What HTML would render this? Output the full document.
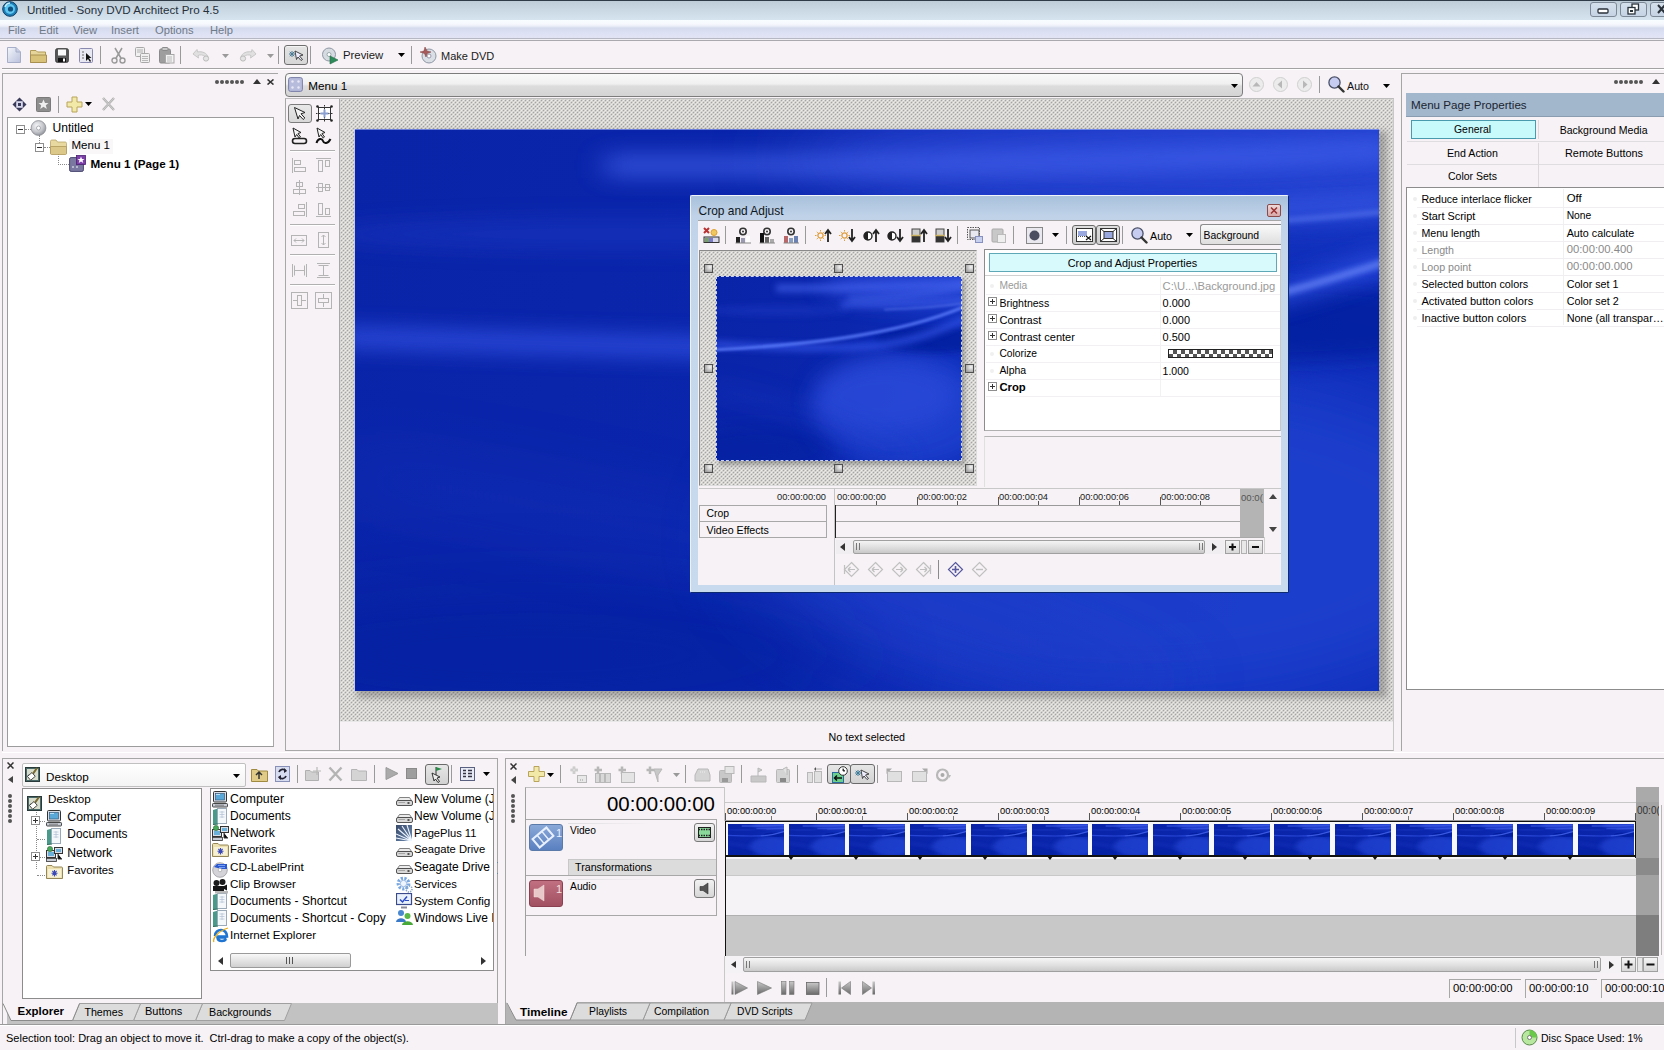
<!DOCTYPE html>
<html><head><meta charset="utf-8">
<style>
*{box-sizing:border-box;margin:0;padding:0}
html,body{width:1664px;height:1050px;overflow:hidden}
body{background:#f6f2f5;font-family:"Liberation Sans",sans-serif;font-size:11px;color:#000;position:relative}
.a{position:absolute}
.t{position:absolute;white-space:nowrap;line-height:1}
.chk{background-color:#dedddb;background-image:radial-gradient(circle at 1px 1px,#8a8a8a 0.8px,transparent 1.2px),radial-gradient(circle at 3px 3px,#8a8a8a 0.8px,transparent 1.2px);background-size:4px 4px}
</style></head><body>
<div class="a" style="left:0px;top:0px;width:1664px;height:20px;background:linear-gradient(#bccbd5,#c8d6e2 40%,#d6e4f0)"></div>
<div class="a" style="left:0px;top:0px;width:1664px;height:1px;background:#2f3b47"></div>
<svg class="a" style="left:2px;top:1px;" width="16" height="16" viewBox="0 0 16 16"><circle cx="8" cy="8" r="7.3" fill="#1e7fb8" stroke="#0c3f66" stroke-width="1"/><circle cx="8" cy="8" r="5" fill="#5ec6f0"/><circle cx="8.5" cy="8" r="2.6" fill="#10507e"/><path d="M3 6A6 6 0 0 1 8 2" stroke="#cdefff" stroke-width="1.4" fill="none"/></svg>
<div class="t" style="left:27px;top:4.18px;font-size:11.6px;color:#26303a;font-weight:normal;">Untitled - Sony DVD Architect Pro 4.5</div>
<div class="a" style="left:1590px;top:2px;width:27px;height:15px;border:1px solid #7d8896;border-radius:3px;background:linear-gradient(#d5e0ec,#c5d3e3)"></div>
<div class="a" style="left:1620px;top:2px;width:27px;height:15px;border:1px solid #7d8896;border-radius:3px;background:linear-gradient(#d5e0ec,#c5d3e3)"></div>
<div class="a" style="left:1650px;top:2px;width:20px;height:15px;border:1px solid #7d8896;border-radius:3px;background:linear-gradient(#d5e0ec,#c5d3e3)"></div>
<svg class="a" style="left:1597px;top:8px;" width="12" height="6" viewBox="0 0 12 6"><rect x="1" y="1" width="10" height="4" rx="1" fill="#fff" stroke="#2a323a" stroke-width="1.3"/></svg>
<svg class="a" style="left:1627px;top:3px;" width="13" height="12" viewBox="0 0 13 12"><rect x="5" y="1" width="6.5" height="6" fill="#fff" stroke="#2a323a" stroke-width="1.3"/><rect x="1" y="4.5" width="7" height="6.5" fill="#fff" stroke="#2a323a" stroke-width="1.3"/><rect x="3" y="7" width="3" height="2" fill="#2a323a"/></svg>
<svg class="a" style="left:1657px;top:4px;" width="8" height="11" viewBox="0 0 8 11"><path d="M1 1L8 9M8 1L1 9" stroke="#2a323a" stroke-width="2"/></svg>
<div class="a" style="left:0px;top:20px;width:1664px;height:18px;background:linear-gradient(#f8fdff 0,#f6f8fd 4px,#eceff9 6px,#d4dbec 8px,#d8ddf0 10px,#dde1f4 13px,#e2e4f4 18px)"></div>
<div class="a" style="left:0px;top:38px;width:1664px;height:1px;background:#b6b8c4"></div>
<div class="a" style="left:0px;top:39px;width:1664px;height:1px;background:#f0f0f4"></div>
<div class="a" style="left:0px;top:40px;width:1664px;height:1px;background:#a9a9ae"></div>
<div class="t" style="left:8px;top:24.52px;font-size:11.2px;color:#6f7a88;font-weight:normal;">File</div>
<div class="t" style="left:39px;top:24.52px;font-size:11.2px;color:#6f7a88;font-weight:normal;">Edit</div>
<div class="t" style="left:73px;top:24.52px;font-size:11.2px;color:#6f7a88;font-weight:normal;">View</div>
<div class="t" style="left:111px;top:24.52px;font-size:11.2px;color:#6f7a88;font-weight:normal;">Insert</div>
<div class="t" style="left:155px;top:24.52px;font-size:11.2px;color:#6f7a88;font-weight:normal;">Options</div>
<div class="t" style="left:210px;top:24.52px;font-size:11.2px;color:#6f7a88;font-weight:normal;">Help</div>
<div class="a" style="left:0px;top:41px;width:1664px;height:27px;background:#f6f2f5"></div>
<div class="a" style="left:2px;top:68px;width:1662px;height:1px;background:#a3a3a3"></div>
<div class="a" style="left:2px;top:69px;width:1662px;height:1px;background:#ffffff"></div>
<svg class="a" style="left:7px;top:47px;" width="14" height="16" viewBox="0 0 14 16"><defs><linearGradient id="gn" x1="0" y1="0" x2="1" y2="1"><stop offset="0" stop-color="#f4f6fb"/><stop offset="1" stop-color="#b9c1dc"/></linearGradient></defs><path d="M0.5 0.5H9L13.5 5V15.5H0.5Z" fill="url(#gn)" stroke="#a6aec8"/><path d="M9 0.5V5H13.5" fill="#c8cfe6" stroke="#a6aec8"/></svg>
<svg class="a" style="left:30px;top:48px;" width="17" height="15" viewBox="0 0 17 15"><path d="M0.5 2.5H6L7.5 4H15.5V14.5H0.5Z" fill="#e6d59a" stroke="#b09a58"/><path d="M0.5 7H16.5V14.5H0.5Z" fill="#d8c27a" stroke="#a89050"/></svg>
<svg class="a" style="left:55px;top:48px;" width="14" height="15" viewBox="0 0 14 15"><rect x="0.7" y="0.7" width="12.6" height="13.6" rx="1.5" fill="#5a5a5a" stroke="#3a3a3a"/><rect x="3" y="1.5" width="8" height="6" fill="#fafafa"/><rect x="3" y="10" width="8" height="4" fill="#111"/><rect x="8" y="10.5" width="2" height="3" fill="#fff"/></svg>
<svg class="a" style="left:79px;top:48px;" width="14" height="15" viewBox="0 0 14 15"><rect x="0.5" y="0.5" width="13" height="14" rx="1" fill="#e8e8f2" stroke="#8a8ab0"/><path d="M3 4H5M3 7H5M3 10H5" stroke="#666"/><path d="M7 5L7 13L9 11L11 14L12 13L10 10L12.5 10Z" fill="#111"/></svg>
<div class="a" style="left:100px;top:46px;width:1px;height:18px;background:#9a9a9a"></div>
<svg class="a" style="left:111px;top:47px;" width="15" height="17" viewBox="0 0 15 17"><path d="M4 1L10.5 12M11 1L4.5 12" stroke="#9a9a9a" stroke-width="1.5"/><circle cx="3.5" cy="13.5" r="2.5" fill="none" stroke="#9a9a9a" stroke-width="1.4"/><circle cx="11.5" cy="13.5" r="2.5" fill="none" stroke="#9a9a9a" stroke-width="1.4"/></svg>
<svg class="a" style="left:135px;top:47px;" width="16" height="16" viewBox="0 0 16 16"><rect x="0.5" y="0.5" width="9" height="9" rx="1" fill="#f0f0f0" stroke="#a8a8a8"/><path d="M2 3H8M2 5H8" stroke="#b0b0b0"/><rect x="5.5" y="6.5" width="9" height="9" rx="1" fill="#f0f0f0" stroke="#a8a8a8"/><path d="M7 9.5H13M7 11.5H13M7 13.5H13" stroke="#b8b8b8"/></svg>
<svg class="a" style="left:159px;top:47px;" width="16" height="17" viewBox="0 0 16 17"><rect x="0.5" y="2" width="11" height="14" rx="1.5" fill="#9e9e9e" stroke="#8a8a8a"/><rect x="3" y="0.5" width="6" height="3" rx="1" fill="#c8c8c8" stroke="#8a8a8a"/><rect x="6.5" y="7.5" width="8.5" height="8.5" fill="#f2f2f2" stroke="#a8a8a8"/><path d="M8 10H13M8 12H13M8 14H13" stroke="#bbb"/></svg>
<div class="a" style="left:180px;top:46px;width:1px;height:18px;background:#9a9a9a"></div>
<svg class="a" style="left:192px;top:48px;" width="20" height="14" viewBox="0 0 20 14"><path d="M1 6L5 1.5L5.5 4C10 3 15 5 16 9L13 8.5C11 6.5 8 6.5 6 7.5L6.5 10Z" fill="#e0e0e0" stroke="#c8c8c8"/><circle cx="14" cy="10.5" r="2.6" fill="#e4e4e4" stroke="#bbbbbb"/></svg>
<svg class="a" style="left:222px;top:54px;" width="7" height="4" viewBox="0 0 7 4"><path d="M0 0H7L3.5 4Z" fill="#9a9a9a"/></svg>
<svg class="a" style="left:237px;top:48px;" width="20" height="14" viewBox="0 0 20 14"><path d="M19 6L15 1.5L14.5 4C10 3 5 5 4 9L7 8.5C9 6.5 12 6.5 14 7.5L13.5 10Z" fill="#e0e0e0" stroke="#c8c8c8"/><circle cx="6" cy="10.5" r="2.6" fill="#e4e4e4" stroke="#bbbbbb"/></svg>
<svg class="a" style="left:267px;top:54px;" width="7" height="4" viewBox="0 0 7 4"><path d="M0 0H7L3.5 4Z" fill="#9a9a9a"/></svg>
<div class="a" style="left:278px;top:46px;width:1px;height:18px;background:#9a9a9a"></div>
<div class="a" style="left:284px;top:45px;width:24px;height:20px;border:1px solid #6e6e6e;border-radius:3px;background:linear-gradient(#e4e4e4,#d6d6d6);box-shadow:inset 0 1px 0 #f4f4f4"></div>
<svg class="a" style="left:288px;top:48px;" width="17" height="14" viewBox="0 0 17 14"><path d="M1 6H7M4 3V9M1.8 3.8L6.2 8.2M6.2 3.8L1.8 8.2" stroke="#4a7a96" stroke-width="1"/><path d="M7 3L15 7L11.5 8L14.5 11.5L13 12.5L10 9L8.5 11.5Z" fill="#eef" stroke="#333" stroke-width="0.9"/></svg>
<div class="a" style="left:310px;top:46px;width:1px;height:18px;background:#9a9a9a"></div>
<svg class="a" style="left:322px;top:47px;" width="17" height="18" viewBox="0 0 17 18"><circle cx="7" cy="7.5" r="6.5" fill="#d6dbe2" stroke="#8f98a4"/><circle cx="7" cy="7.5" r="2" fill="#fff" stroke="#9aa"/><path d="M8 9L16 13L8 17Z" fill="#2e8a5a" stroke="#1f6a44" stroke-width="0.6"/></svg>
<div class="t" style="left:343px;top:50.41px;font-size:11.33px;color:#1a1a1a;font-weight:normal;">Preview</div>
<svg class="a" style="left:398px;top:53px;" width="7" height="4" viewBox="0 0 7 4"><path d="M0 0H7L3.5 4Z" fill="#000"/></svg>
<div class="a" style="left:411px;top:46px;width:1px;height:18px;background:#9a9a9a"></div>
<svg class="a" style="left:419px;top:46px;" width="18" height="18" viewBox="0 0 18 18"><circle cx="10" cy="10" r="7" fill="#dadfe6" stroke="#8f98a4"/><circle cx="10" cy="10" r="2" fill="#fff" stroke="#99a"/><path d="M1 6L5 5L6 1L8 5L12 6L8 7.5L7 11L5.5 7.5Z" fill="#a85a5a" stroke="#7a3a3a" stroke-width="0.5"/></svg>
<div class="t" style="left:441px;top:50.67px;font-size:11.02px;color:#1a1a1a;font-weight:normal;">Make DVD</div>
<div class="a" style="left:2px;top:73px;width:276px;height:678px;border-top:1px solid #a6a6a6;border-left:1px solid #a6a6a6"></div>
<div class="a" style="left:215px;top:80px;width:4px;height:4px;border-radius:50%;background:#555"></div>
<div class="a" style="left:220px;top:80px;width:4px;height:4px;border-radius:50%;background:#555"></div>
<div class="a" style="left:225px;top:80px;width:4px;height:4px;border-radius:50%;background:#555"></div>
<div class="a" style="left:230px;top:80px;width:4px;height:4px;border-radius:50%;background:#555"></div>
<div class="a" style="left:235px;top:80px;width:4px;height:4px;border-radius:50%;background:#555"></div>
<div class="a" style="left:240px;top:80px;width:4px;height:4px;border-radius:50%;background:#555"></div>
<svg class="a" style="left:253px;top:79px;" width="8" height="5" viewBox="0 0 8 5"><path d="M0 5L4 0L8 5Z" fill="#333"/></svg>
<svg class="a" style="left:267px;top:79px;" width="7" height="6" viewBox="0 0 7 6"><path d="M0.5 0.5L6.5 5.5M6.5 0.5L0.5 5.5" stroke="#333" stroke-width="1.6"/></svg>
<svg class="a" style="left:12px;top:97px;" width="15" height="15" viewBox="0 0 15 15"><path d="M7.5 0.5L14.5 7.5L7.5 14.5L0.5 7.5Z" fill="#3a3a5a"/><rect x="4.2" y="4.2" width="6.6" height="6.6" fill="#d8d8ee"/><rect x="6" y="6" width="3" height="3" fill="#3a3a5a"/></svg>
<svg class="a" style="left:36px;top:97px;" width="15" height="15" viewBox="0 0 15 15"><rect x="0.5" y="0.5" width="14" height="14" rx="1" fill="#8e8e8e" stroke="#7a7a7a"/><path d="M7.5 2.5L9 6H12.5L9.8 8.2L10.8 12L7.5 9.8L4.2 12L5.2 8.2L2.5 6H6Z" fill="#f0f0f0"/></svg>
<div class="a" style="left:58px;top:96px;width:1px;height:17px;background:#9a9a9a"></div>
<svg class="a" style="left:66px;top:96px;" width="17" height="17" viewBox="0 0 17 17"><path d="M6 1H11V6H16V11H11V16H6V11H1V6H6Z" fill="#f2e8a8" stroke="#b8a45a"/></svg>
<svg class="a" style="left:85px;top:102px;" width="7" height="4" viewBox="0 0 7 4"><path d="M0 0H7L3.5 4Z" fill="#000"/></svg>
<svg class="a" style="left:101px;top:96px;" width="15" height="16" viewBox="0 0 15 16"><path d="M2 2L13 14M13 2L2 14" stroke="#b0b0b0" stroke-width="2.4"/><path d="M2 2L13 14M13 2L2 14" stroke="#d8d8d8" stroke-width="0.8"/></svg>
<div class="a" style="left:7px;top:117px;width:267px;height:630px;background:#fff;border:1px solid #9c9c9c;border-right-color:#a8a8a8"></div>
<div class="a" style="left:25px;top:129px;width:6px;height:1px;border-top:1px dotted #8a8a8a"></div>
<div class="a" style="left:39px;top:135px;width:1px;height:8px;border-left:1px dotted #8a8a8a"></div>
<div class="a" style="left:44px;top:147px;width:6px;height:1px;border-top:1px dotted #8a8a8a"></div>
<div class="a" style="left:58px;top:154px;width:1px;height:11px;border-left:1px dotted #8a8a8a"></div>
<div class="a" style="left:58px;top:164px;width:11px;height:1px;border-top:1px dotted #8a8a8a"></div>
<svg class="a" style="left:16px;top:125px;" width="9" height="9" viewBox="0 0 9 9"><rect x="0.5" y="0.5" width="8" height="8" fill="#fff" stroke="#8e8e8e"/><path d="M2 4.5H7" stroke="#333"/></svg>
<svg class="a" style="left:35px;top:143px;" width="9" height="9" viewBox="0 0 9 9"><rect x="0.5" y="0.5" width="8" height="8" fill="#fff" stroke="#8e8e8e"/><path d="M2 4.5H7" stroke="#333"/></svg>
<svg class="a" style="left:30px;top:120px;" width="17" height="16" viewBox="0 0 17 16"><defs><radialGradient id="dg" cx="0.4" cy="0.35" r="0.7"><stop offset="0" stop-color="#f6f6f8"/><stop offset="0.6" stop-color="#c4c6cc"/><stop offset="1" stop-color="#8c8f96"/></radialGradient></defs><circle cx="8.5" cy="8" r="7.4" fill="url(#dg)" stroke="#8a8d94" stroke-width="0.8"/><circle cx="8.5" cy="8" r="2" fill="#fff" stroke="#9a9da4" stroke-width="0.8"/></svg>
<div class="t" style="left:52.5px;top:121.77px;font-size:12.09px;color:#000;font-weight:normal;">Untitled</div>
<svg class="a" style="left:50px;top:139px;" width="17" height="16" viewBox="0 0 17 16"><path d="M0.5 2.5C0.5 1.5 1 1 2 1H6L7.5 3H15C16 3 16.5 3.5 16.5 4.5V14.5H0.5Z" fill="#e8d9a0" stroke="#b8a468" stroke-width="0.8"/><path d="M0.5 7.5H16.5V14.5C16.5 15 16 15.5 15.5 15.5H1.5C1 15.5 0.5 15 0.5 14.5Z" fill="#dcc98a" stroke="#b0995a" stroke-width="0.8"/></svg>
<div class="a" style="left:69px;top:139px;width:44px;height:15px;background:#f9f7f8"></div>
<div class="t" style="left:71.5px;top:140.23px;font-size:11.54px;color:#000;font-weight:normal;">Menu 1</div>
<svg class="a" style="left:69px;top:155px;" width="17" height="17" viewBox="0 0 17 17"><rect x="0.6" y="2.6" width="13.8" height="13.8" rx="1.5" fill="#7a78a0" stroke="#4a4870" stroke-width="1"/><circle cx="4" cy="12" r="1" fill="#ccd"/><circle cx="8" cy="12" r="1" fill="#ccd"/><rect x="7.5" y="0.5" width="9" height="9" fill="#7c3fa8" stroke="#4a2070" stroke-width="0.8"/><path d="M12 1.5L13 4H15.5L13.5 5.5L14.3 8L12 6.5L9.7 8L10.5 5.5L8.5 4H11Z" fill="#fff"/></svg>
<div class="t" style="left:90.4px;top:158.11px;font-size:11.68px;color:#000;font-weight:bold;">Menu 1 (Page 1)</div>
<div class="a" style="left:285px;top:73px;width:958px;height:24px;border:1px solid #7c7c7c;border-radius:4px;background:linear-gradient(#faf9fa,#f1f0f1 45%,#dcdcdc 55%,#d4d4d4)"></div>
<svg class="a" style="left:288px;top:77px;" width="15" height="15" viewBox="0 0 15 15"><rect x="0.6" y="0.6" width="13.8" height="13.8" rx="2" fill="#b8bcdc" stroke="#7a7ea8" stroke-width="1"/><circle cx="4.5" cy="4.5" r="1.2" fill="#e8e8f4"/><circle cx="10.5" cy="4.5" r="1.2" fill="#e8e8f4"/><circle cx="4.5" cy="10.5" r="1.2" fill="#e8e8f4"/><circle cx="10.5" cy="10.5" r="1.2" fill="#e8e8f4"/></svg>
<div class="t" style="left:308.3px;top:80.40px;font-size:11.69px;color:#000;font-weight:normal;">Menu 1</div>
<svg class="a" style="left:1231px;top:84px;" width="7" height="4" viewBox="0 0 7 4"><path d="M0 0H7L3.5 4Z" fill="#000"/></svg>
<svg class="a" style="left:1249px;top:77px;" width="15" height="15" viewBox="0 0 15 15"><circle cx="7.5" cy="7.5" r="7" fill="#ececec" stroke="#d0d0d0"/><path d="M3.5 9.5L7.5 5L11.5 9.5Z" fill="#b8b8b8"/></svg>
<svg class="a" style="left:1273px;top:77px;" width="15" height="15" viewBox="0 0 15 15"><circle cx="7.5" cy="7.5" r="7" fill="#ececec" stroke="#d0d0d0"/><path d="M9 3.5L4.5 7.5L9 11.5Z" fill="#b8b8b8"/></svg>
<svg class="a" style="left:1297px;top:77px;" width="15" height="15" viewBox="0 0 15 15"><circle cx="7.5" cy="7.5" r="7" fill="#ececec" stroke="#d0d0d0"/><path d="M6 3.5L10.5 7.5L6 11.5Z" fill="#b8b8b8"/></svg>
<div class="a" style="left:1319px;top:76px;width:1px;height:17px;background:#9a9a9a"></div>
<svg class="a" style="left:1328px;top:76px;" width="17" height="17" viewBox="0 0 17 17"><circle cx="6.5" cy="6.5" r="5.6" fill="#c6ccf0" stroke="#4a5068" stroke-width="1.3"/><path d="M10.5 10.5L15.5 15.5" stroke="#333" stroke-width="2.4" stroke-linecap="round"/></svg>
<div class="t" style="left:1347px;top:80.94px;font-size:10.7px;color:#111;font-weight:normal;">Auto</div>
<svg class="a" style="left:1383px;top:84px;" width="7" height="4" viewBox="0 0 7 4"><path d="M0 0H7L3.5 4Z" fill="#000"/></svg>
<div class="a" style="left:285px;top:98px;width:1109px;height:653px;border:1px solid #a8a8a8;border-top-color:#bcbcbc;border-right-color:#c8c8c8"></div>
<div class="a" style="left:339px;top:99px;width:1px;height:651px;background:#a8a8a8"></div>
<svg class="a" style="left:340px;top:99px;" width="1053" height="622" viewBox="0 0 1053 622"><defs><pattern id="chk1" width="4" height="4" patternUnits="userSpaceOnUse"><rect width="4" height="4" fill="#d3d2cf"/><rect x="1" y="1" width="1" height="1" fill="#a4a4a4"/><rect x="3" y="3" width="1" height="1" fill="#a4a4a4"/><rect x="3" y="1" width="1" height="1" fill="#eeedeb"/><rect x="1" y="3" width="1" height="1" fill="#eeedeb"/><rect x="0" y="0" width="1" height="1" fill="#e2e1de"/><rect x="2" y="2" width="1" height="1" fill="#e2e1de"/></pattern></defs><rect width="1053" height="622" fill="url(#chk1)"/></svg>
<div class="a" style="left:340px;top:721px;width:1053px;height:1px;background:#e8e8e8"></div>
<div class="a" style="left:288px;top:104px;width:24px;height:19px;border:1px solid #7c7c7c;border-radius:3px;background:linear-gradient(#e8e8e8,#d8d8d8)"></div>
<svg class="a" style="left:293px;top:106px;" width="14" height="15" viewBox="0 0 14 15"><path d="M1.5 1.5L12 6.5L8 7.8L11.8 12L10.2 13.5L6.5 9.5L5 13Z" fill="#f4f4f4" stroke="#222" stroke-width="1"/></svg>
<svg class="a" style="left:316px;top:105px;" width="17" height="17" viewBox="0 0 17 17"><rect x="2.5" y="2.5" width="12" height="12" fill="#fff" stroke="#333"/><path d="M8.5 0V17M0 8.5H17" stroke="#333" stroke-width="1" stroke-dasharray="1.5 1.5"/><path d="M8.5 4.5V12.5M4.5 8.5H12.5" stroke="#8aa0d0" stroke-width="2"/><circle cx="1.5" cy="1.5" r="1.3" fill="#222"/><circle cx="15.5" cy="1.5" r="1.3" fill="#222"/><circle cx="1.5" cy="15.5" r="1.3" fill="#222"/><circle cx="15.5" cy="15.5" r="1.3" fill="#222"/></svg>
<svg class="a" style="left:291px;top:127px;" width="17" height="18" viewBox="0 0 17 18"><path d="M2 1L10 5.5L7 6.5L9.5 10L8.2 11L5.7 7.5L4 10Z" fill="#f4f4f4" stroke="#222" stroke-width="1"/><rect x="1.5" y="11.5" width="14" height="5" rx="2.5" fill="none" stroke="#222" stroke-width="1.6"/></svg>
<svg class="a" style="left:315px;top:127px;" width="17" height="18" viewBox="0 0 17 18"><path d="M2 1L10 5.5L7 6.5L9.5 10L8.2 11L5.7 7.5L4 10Z" fill="#f4f4f4" stroke="#222" stroke-width="1"/><path d="M1.5 16C3 11 7 11 8 14S13 17 15.5 12" fill="none" stroke="#111" stroke-width="2"/></svg>
<div class="a" style="left:290px;top:150px;width:45px;height:1px;background:#b0b0b0"></div>
<div class="a" style="left:290px;top:151px;width:45px;height:1px;background:#ffffff"></div>
<svg class="a" style="left:291px;top:157px;" width="17" height="17" viewBox="0 0 17 17"><path d="M1.5 1V16" stroke="#b4b4b4"/><rect x="3.5" y="3.5" width="6" height="4" fill="none" stroke="#b4b4b4"/><rect x="3.5" y="10.5" width="11" height="4" fill="none" stroke="#b4b4b4"/></svg>
<svg class="a" style="left:315px;top:157px;" width="17" height="17" viewBox="0 0 17 17"><path d="M1 1.5H16" stroke="#b4b4b4"/><rect x="3.5" y="3.5" width="4" height="11" fill="none" stroke="#b4b4b4"/><rect x="10.5" y="3.5" width="4" height="6" fill="none" stroke="#b4b4b4"/></svg>
<svg class="a" style="left:291px;top:179px;" width="17" height="17" viewBox="0 0 17 17"><path d="M8.5 1V16" stroke="#b4b4b4"/><rect x="5.5" y="3.5" width="6" height="4" fill="none" stroke="#b4b4b4"/><rect x="2.5" y="10.5" width="12" height="4" fill="none" stroke="#b4b4b4"/></svg>
<svg class="a" style="left:315px;top:179px;" width="17" height="17" viewBox="0 0 17 17"><path d="M1 8.5H16" stroke="#b4b4b4"/><rect x="3.5" y="4.5" width="4" height="8" fill="none" stroke="#b4b4b4"/><rect x="10.5" y="5.5" width="4" height="6" fill="none" stroke="#b4b4b4"/></svg>
<svg class="a" style="left:291px;top:201px;" width="17" height="17" viewBox="0 0 17 17"><path d="M15.5 1V16" stroke="#b4b4b4"/><rect x="7.5" y="3.5" width="6" height="4" fill="none" stroke="#b4b4b4"/><rect x="2.5" y="10.5" width="11" height="4" fill="none" stroke="#b4b4b4"/></svg>
<svg class="a" style="left:315px;top:201px;" width="17" height="17" viewBox="0 0 17 17"><path d="M1 15.5H16" stroke="#b4b4b4"/><rect x="3.5" y="2.5" width="4" height="11" fill="none" stroke="#b4b4b4"/><rect x="10.5" y="7.5" width="4" height="6" fill="none" stroke="#b4b4b4"/></svg>
<div class="a" style="left:290px;top:224px;width:45px;height:1px;background:#b0b0b0"></div>
<div class="a" style="left:290px;top:225px;width:45px;height:1px;background:#fff"></div>
<svg class="a" style="left:291px;top:232px;" width="17" height="17" viewBox="0 0 17 17"><rect x="0.5" y="3.5" width="15" height="10" fill="none" stroke="#b4b4b4"/><path d="M3 8.5H13M3 8.5L5 6.5M3 8.5L5 10.5M13 8.5L11 6.5M13 8.5L11 10.5" stroke="#b4b4b4"/></svg>
<svg class="a" style="left:315px;top:232px;" width="17" height="17" viewBox="0 0 17 17"><rect x="3.5" y="0.5" width="10" height="15" fill="none" stroke="#b4b4b4"/><path d="M8.5 3V13M8.5 3L6.5 5M8.5 3L10.5 5M8.5 13L6.5 11M8.5 13L10.5 11" stroke="#b4b4b4"/></svg>
<div class="a" style="left:290px;top:254px;width:45px;height:1px;background:#b0b0b0"></div>
<div class="a" style="left:290px;top:255px;width:45px;height:1px;background:#fff"></div>
<svg class="a" style="left:291px;top:262px;" width="17" height="17" viewBox="0 0 17 17"><path d="M1.5 2V15M15.5 2V15M3.5 3.5V13.5M13.5 3.5V13.5M4 8.5H13" stroke="#b4b4b4"/></svg>
<svg class="a" style="left:315px;top:262px;" width="17" height="17" viewBox="0 0 17 17"><path d="M2 1.5H15M2 15.5H15M3.5 3.5H13.5M3.5 13.5H13.5M8.5 4V13" stroke="#b4b4b4"/></svg>
<div class="a" style="left:290px;top:284px;width:45px;height:1px;background:#b0b0b0"></div>
<div class="a" style="left:290px;top:285px;width:45px;height:1px;background:#fff"></div>
<svg class="a" style="left:291px;top:292px;" width="17" height="17" viewBox="0 0 17 17"><rect x="0.5" y="0.5" width="16" height="16" fill="none" stroke="#b4b4b4"/><rect x="6.5" y="3.5" width="4" height="10" fill="none" stroke="#b4b4b4"/><path d="M2 8.5H6M11 8.5H15" stroke="#b4b4b4"/></svg>
<svg class="a" style="left:315px;top:292px;" width="17" height="17" viewBox="0 0 17 17"><rect x="0.5" y="0.5" width="16" height="16" fill="none" stroke="#b4b4b4"/><rect x="3.5" y="6.5" width="10" height="4" fill="none" stroke="#b4b4b4"/><path d="M8.5 2V6M8.5 11V15" stroke="#b4b4b4"/></svg>
<div class="t" style="left:828.6px;top:731.57px;font-size:10.67px;color:#000;font-weight:normal;">No text selected</div>
<div class="a" style="left:357px;top:131px;width:1030px;height:567px;background:rgba(70,70,70,0.35);filter:blur(3px)"></div>
<svg class="a" style="left:355px;top:129px;" width="1024" height="562" viewBox="0 0 1024 562"><defs>
<linearGradient id="mb" x1="0" y1="0" x2="1" y2="0.2"><stop offset="0" stop-color="#0a24a8"/><stop offset="0.55" stop-color="#0a26ac"/><stop offset="1" stop-color="#0e2eba"/></linearGradient>
<filter id="mf1" filterUnits="userSpaceOnUse" x="-200" y="-200" width="1424" height="1170"><feGaussianBlur stdDeviation="45"/></filter>
<filter id="mf2" filterUnits="userSpaceOnUse" x="-200" y="-200" width="1424" height="1170"><feGaussianBlur stdDeviation="14"/></filter>
<filter id="mf3" filterUnits="userSpaceOnUse" x="-200" y="-200" width="1424" height="1170"><feGaussianBlur stdDeviation="4"/></filter>
</defs>
<g transform="scale(1.00000,0.72987)">
<rect width="1024" height="770" fill="url(#mb)"/>
<ellipse cx="860" cy="40" rx="420" ry="80" fill="#3050e0" opacity="0.7" filter="url(#mf1)"/>
<ellipse cx="780" cy="560" rx="380" ry="230" fill="#2848d8" opacity="0.6" filter="url(#mf1)"/>
<ellipse cx="180" cy="720" rx="320" ry="100" fill="#061c9a" opacity="0.4" filter="url(#mf1)"/>
<path d="M-20 470C250 520 500 600 800 770" stroke="#1a3ac4" stroke-width="60" fill="none" opacity="0.35" filter="url(#mf1)"/>
<ellipse cx="900" cy="265" rx="240" ry="55" fill="#051a9a" opacity="0.7" filter="url(#mf2)"/>
<ellipse cx="260" cy="144" rx="300" ry="22" fill="#1a38c2" opacity="0.5" filter="url(#mf2)"/>
<path d="M250 50C600 52 850 42 1040 28" stroke="#4464ee" stroke-width="34" fill="none" opacity="0.6" filter="url(#mf2)"/>
<path d="M520 120C760 118 900 115 1040 100" stroke="#4262ee" stroke-width="26" fill="none" opacity="0.6" filter="url(#mf2)"/>
<path d="M-20 285C250 295 480 312 700 285C850 265 950 215 1040 178" stroke="#3454e8" stroke-width="30" fill="none" opacity="0.7" filter="url(#mf2)"/>
<path d="M600 298C800 280 920 230 1040 178" stroke="#6a88fa" stroke-width="10" fill="none" opacity="0.7" filter="url(#mf3)"/>
<path d="M700 140C850 135 950 125 1040 112" stroke="#6a88fa" stroke-width="7" fill="none" opacity="0.5" filter="url(#mf3)"/>
</g></svg>
<div class="a" style="left:354px;top:129px;width:1026px;height:563px;border:1px solid rgba(190,200,255,0.55);border-right:none;border-bottom:none"></div>
<div class="a" style="left:690px;top:195px;width:599px;height:398px;background:linear-gradient(#a9c1dc,#bfd2e8 20px,#c3d6ea 60px,#c8daee);border:1px solid #eef4fa;border-right-color:#0e2a6e;border-bottom-color:#0e2a6e;border-radius:2px"></div>
<div class="t" style="left:698.6px;top:205.88px;font-size:11.95px;color:#0e1620;font-weight:normal;">Crop and Adjust</div>
<div class="a" style="left:1267px;top:204px;width:14px;height:13px;border:1px solid #8a4a4a;border-radius:2px;background:linear-gradient(#f0d8d8,#d8a8a8)"></div>
<svg class="a" style="left:1270px;top:206px;" width="8" height="9" viewBox="0 0 8 9"><path d="M1 1.5L7 7.5M7 1.5L1 7.5" stroke="#9a3030" stroke-width="1.5"/></svg>
<div class="a" style="left:698px;top:220px;width:583px;height:365px;background:#f6f2f5;border-top:1px solid #a6a6a6"></div>
<svg class="a" style="left:703px;top:227px;" width="17" height="16" viewBox="0 0 17 16"><path d="M1 1L6 6M6 1L1 6" stroke="#b83232" stroke-width="2"/><circle cx="11" cy="5.5" r="3" fill="#f0c860" stroke="#e0a030"/><rect x="1" y="10" width="15" height="5.5" fill="#d8d8e8" stroke="#333"/><rect x="2" y="11" width="4" height="4" fill="#7aa06a"/><rect x="6" y="11" width="4" height="4" fill="#7a7ac8"/></svg>
<div class="a" style="left:725px;top:226px;width:1px;height:18px;background:#9a9a9a"></div>
<svg class="a" style="left:735px;top:227px;" width="17" height="17" viewBox="0 0 17 17"><circle cx="8" cy="4.5" r="3.2" fill="none" stroke="#333" stroke-width="1.6"/><circle cx="8" cy="4.5" r="1" fill="#333"/><rect x="1" y="10" width="4" height="6" fill="#222"/><rect x="6" y="11" width="4" height="5" fill="#9a9ab0"/><rect x="11" y="9" width="4" height="7" fill="#fff"/><path d="M0.5 16H16" stroke="#888"/></svg>
<svg class="a" style="left:759px;top:227px;" width="17" height="17" viewBox="0 0 17 17"><circle cx="8" cy="4.5" r="3.2" fill="none" stroke="#333" stroke-width="1.6"/><circle cx="8" cy="4.5" r="1" fill="#333"/><rect x="1" y="6" width="4" height="10" fill="#111"/><rect x="6" y="10" width="4" height="6" fill="#666"/><rect x="11" y="12" width="4" height="4" fill="#aaa"/><path d="M0.5 16H16" stroke="#888"/></svg>
<svg class="a" style="left:783px;top:227px;" width="17" height="17" viewBox="0 0 17 17"><circle cx="8" cy="4.5" r="3.2" fill="none" stroke="#333" stroke-width="1.6"/><circle cx="8" cy="4.5" r="1" fill="#333"/><rect x="1" y="9" width="4" height="7" fill="#b86868"/><rect x="6" y="11" width="4" height="5" fill="#8aa0c0"/><rect x="11" y="9" width="4" height="7" fill="#6a80b0"/><path d="M0.5 16H16" stroke="#888"/></svg>
<div class="a" style="left:805px;top:226px;width:1px;height:18px;background:#9a9a9a"></div>
<svg class="a" style="left:815px;top:227px;" width="17" height="17" viewBox="0 0 17 17"><circle cx="5.5" cy="8.5" r="2.6" fill="none" stroke="#e0a040" stroke-width="1.3"/><path d="M5.5 3V4.5M5.5 12.5V14M0 8.5H1.5M9.5 8.5H11M1.8 4.8L2.8 5.8M8.2 11.2L9.2 12.2M1.8 12.2L2.8 11.2M8.2 5.8L9.2 4.8" stroke="#e0a040" stroke-width="1"/><path d="M13 15V4M10 7L13 3L16 7" stroke="#222" stroke-width="1.8" fill="none"/></svg>
<svg class="a" style="left:839px;top:227px;" width="17" height="17" viewBox="0 0 17 17"><circle cx="5.5" cy="8.5" r="2.6" fill="none" stroke="#e0a040" stroke-width="1.3"/><path d="M5.5 3V4.5M5.5 12.5V14M0 8.5H1.5M9.5 8.5H11M1.8 4.8L2.8 5.8M8.2 11.2L9.2 12.2M1.8 12.2L2.8 11.2M8.2 5.8L9.2 4.8" stroke="#e0a040" stroke-width="1"/><path d="M13 2V13M10 10L13 14L16 10" stroke="#222" stroke-width="1.8" fill="none"/></svg>
<svg class="a" style="left:863px;top:227px;" width="17" height="17" viewBox="0 0 17 17"><circle cx="5" cy="9" r="4" fill="#fff" stroke="#222" stroke-width="1.4"/><path d="M5 5A4 4 0 0 0 5 13Z" fill="#222"/><path d="M13 15V4M10 7L13 3L16 7" stroke="#222" stroke-width="1.8" fill="none"/></svg>
<svg class="a" style="left:887px;top:227px;" width="17" height="17" viewBox="0 0 17 17"><circle cx="5" cy="9" r="4" fill="#fff" stroke="#222" stroke-width="1.4"/><path d="M5 5A4 4 0 0 0 5 13Z" fill="#222"/><path d="M13 2V13M10 10L13 14L16 10" stroke="#222" stroke-width="1.8" fill="none"/></svg>
<svg class="a" style="left:911px;top:227px;" width="17" height="17" viewBox="0 0 17 17"><rect x="1" y="2" width="8" height="13" fill="#ccc" stroke="#444"/><rect x="1" y="9" width="8" height="6" fill="#333"/><path d="M0 8.5H10" stroke="#c8b060" stroke-width="1.5"/><path d="M13 15V4M10 7L13 3L16 7" stroke="#222" stroke-width="1.8" fill="none"/></svg>
<svg class="a" style="left:935px;top:227px;" width="17" height="17" viewBox="0 0 17 17"><rect x="1" y="2" width="8" height="13" fill="#ccc" stroke="#444"/><rect x="1" y="9" width="8" height="6" fill="#333"/><path d="M0 8.5H10" stroke="#c8b060" stroke-width="1.5"/><path d="M13 2V13M10 10L13 14L16 10" stroke="#222" stroke-width="1.8" fill="none"/></svg>
<div class="a" style="left:957px;top:226px;width:1px;height:18px;background:#9a9a9a"></div>
<svg class="a" style="left:967px;top:227px;" width="17" height="17" viewBox="0 0 17 17"><rect x="0.5" y="0.5" width="12" height="12" fill="none" stroke="#555" stroke-dasharray="1.5 1"/><rect x="3" y="3" width="9" height="8" fill="#e8e8f0" stroke="#555"/><rect x="8.5" y="9.5" width="7" height="6" fill="#c8d0f0" stroke="#8890c0"/></svg>
<svg class="a" style="left:991px;top:227px;" width="17" height="17" viewBox="0 0 17 17"><rect x="1" y="2" width="11" height="13" rx="1" fill="#c8c8c8" stroke="#aaa"/><rect x="6.5" y="7.5" width="8" height="8" fill="#eee" stroke="#bbb"/></svg>
<div class="a" style="left:1013px;top:226px;width:1px;height:18px;background:#9a9a9a"></div>
<svg class="a" style="left:1026px;top:227px;" width="17" height="17" viewBox="0 0 17 17"><rect x="0.5" y="0.5" width="16" height="16" fill="#e8e8ee" stroke="#888"/><circle cx="8.5" cy="8.5" r="5" fill="#4a4e60"/></svg>
<svg class="a" style="left:1052px;top:233px;" width="7" height="4" viewBox="0 0 7 4"><path d="M0 0H7L3.5 4Z" fill="#000"/></svg>
<div class="a" style="left:1066px;top:226px;width:1px;height:18px;background:#9a9a9a"></div>
<div class="a" style="left:1072px;top:225px;width:24px;height:20px;border:1px solid #6a6a6a;border-radius:3px;background:linear-gradient(#dedede,#cfcfcf)"></div>
<div class="a" style="left:1096px;top:225px;width:24px;height:20px;border:1px solid #6a6a6a;border-radius:3px;background:linear-gradient(#dedede,#cfcfcf)"></div>
<svg class="a" style="left:1076px;top:228px;" width="17" height="14" viewBox="0 0 17 14"><rect x="0.5" y="0.5" width="16" height="13" fill="#fff" stroke="#333"/><rect x="2" y="3" width="9" height="5" fill="#9aa8e0"/><path d="M2 8.5H11" stroke="#555" stroke-dasharray="1 1"/><path d="M10 8L15 12M15 8L10 12" stroke="#111" stroke-width="1.2"/></svg>
<svg class="a" style="left:1100px;top:228px;" width="17" height="14" viewBox="0 0 17 14"><rect x="0.5" y="0.5" width="16" height="13" fill="#fff" stroke="#333"/><rect x="4" y="3.5" width="9" height="7" fill="#9aa8e0" stroke="#333"/><path d="M1 1L4 3.5M16 1L13 3.5M1 13L4 10.5M16 13L13 10.5" stroke="#333"/></svg>
<div class="a" style="left:1122px;top:226px;width:1px;height:18px;background:#9a9a9a"></div>
<svg class="a" style="left:1131px;top:227px;" width="17" height="17" viewBox="0 0 17 17"><circle cx="6.5" cy="6.5" r="5.6" fill="#c6ccf0" stroke="#4a5068" stroke-width="1.3"/><path d="M10.5 10.5L15.5 15.5" stroke="#333" stroke-width="2.4" stroke-linecap="round"/></svg>
<div class="t" style="left:1150px;top:230.95px;font-size:10.69px;color:#000;font-weight:normal;">Auto</div>
<svg class="a" style="left:1186px;top:233px;" width="7" height="4" viewBox="0 0 7 4"><path d="M0 0H7L3.5 4Z" fill="#000"/></svg>
<div class="a" style="left:1200px;top:224px;width:81px;height:21px;border:1px solid #8c8c8c;border-right:none;border-radius:3px 0 0 3px;background:linear-gradient(#fafafa,#ececec 50%,#dedede)"></div>
<div class="t" style="left:1203.6px;top:230.71px;font-size:10.38px;color:#000;font-weight:normal;">Background</div>
<div class="a" style="left:699px;top:250px;width:278px;height:236px;border:1px solid #8a8a8a;border-right-color:#ddd;border-bottom-color:#ddd"></div>
<svg class="a" style="left:700px;top:251px;" width="276" height="234" viewBox="0 0 276 234"><defs><pattern id="chk2" width="4" height="4" patternUnits="userSpaceOnUse"><rect width="4" height="4" fill="#d3d2cf"/><rect x="1" y="1" width="1" height="1" fill="#a4a4a4"/><rect x="3" y="3" width="1" height="1" fill="#a4a4a4"/><rect x="3" y="1" width="1" height="1" fill="#eeedeb"/><rect x="1" y="3" width="1" height="1" fill="#eeedeb"/><rect x="0" y="0" width="1" height="1" fill="#e2e1de"/><rect x="2" y="2" width="1" height="1" fill="#e2e1de"/></pattern></defs><rect width="276" height="234" fill="url(#chk2)"/></svg>
<div class="a" style="left:719px;top:279px;width:246px;height:186px;background:rgba(60,60,60,0.35);filter:blur(2px)"></div>
<svg class="a" style="left:716px;top:276px;" width="246" height="185" viewBox="0 0 246 185"><defs>
<linearGradient id="pb" x1="0" y1="0" x2="1" y2="0.2"><stop offset="0" stop-color="#0a24a8"/><stop offset="0.55" stop-color="#0a26ac"/><stop offset="1" stop-color="#0e2eba"/></linearGradient>
<filter id="pf1" filterUnits="userSpaceOnUse" x="-200" y="-200" width="1424" height="1170"><feGaussianBlur stdDeviation="45"/></filter>
<filter id="pf2" filterUnits="userSpaceOnUse" x="-200" y="-200" width="1424" height="1170"><feGaussianBlur stdDeviation="14"/></filter>
<filter id="pf3" filterUnits="userSpaceOnUse" x="-200" y="-200" width="1424" height="1170"><feGaussianBlur stdDeviation="4"/></filter>
</defs>
<g transform="scale(0.24023,0.24026)">
<rect width="1024" height="770" fill="url(#pb)"/>
<ellipse cx="860" cy="40" rx="420" ry="80" fill="#3050e0" opacity="0.7" filter="url(#pf1)"/>
<ellipse cx="780" cy="560" rx="380" ry="230" fill="#2848d8" opacity="0.6" filter="url(#pf1)"/>
<ellipse cx="180" cy="720" rx="320" ry="100" fill="#061c9a" opacity="0.4" filter="url(#pf1)"/>
<path d="M-20 470C250 520 500 600 800 770" stroke="#1a3ac4" stroke-width="60" fill="none" opacity="0.35" filter="url(#pf1)"/>
<ellipse cx="900" cy="265" rx="240" ry="55" fill="#051a9a" opacity="0.7" filter="url(#pf2)"/>
<ellipse cx="260" cy="144" rx="300" ry="22" fill="#1a38c2" opacity="0.5" filter="url(#pf2)"/>
<path d="M250 50C600 52 850 42 1040 28" stroke="#4464ee" stroke-width="34" fill="none" opacity="0.6" filter="url(#pf2)"/>
<path d="M520 120C760 118 900 115 1040 100" stroke="#4262ee" stroke-width="26" fill="none" opacity="0.6" filter="url(#pf2)"/>
<path d="M-20 285C250 295 480 312 700 285C850 265 950 215 1040 178" stroke="#3454e8" stroke-width="30" fill="none" opacity="0.7" filter="url(#pf2)"/>

<path d="M700 140C850 135 950 125 1040 112" stroke="#6a88fa" stroke-width="7" fill="none" opacity="0.5" filter="url(#pf3)"/>
<path d="M-60 310C350 290 750 250 1040 125" stroke="#5a7afa" stroke-width="14" fill="none" opacity="0.8" filter="url(#pf3)"/><path d="M550 95C780 90 920 70 1040 40" stroke="#4a6af0" stroke-width="20" fill="none" opacity="0.6" filter="url(#pf2)"/><ellipse cx="700" cy="500" rx="300" ry="150" fill="#3050e0" opacity="0.5" filter="url(#pf1)"/></g></svg>
<div class="a" style="left:716px;top:276px;width:246px;height:185px;border:1px dashed rgba(255,255,255,0.8)"></div>
<div class="a" style="left:704px;top:264px;width:9px;height:9px;border:1px solid #505050;background:radial-gradient(circle at 70% 30%,#f4f4f4,#a0a0a0 80%)"></div>
<div class="a" style="left:834px;top:264px;width:9px;height:9px;border:1px solid #505050;background:radial-gradient(circle at 70% 30%,#f4f4f4,#a0a0a0 80%)"></div>
<div class="a" style="left:965px;top:264px;width:9px;height:9px;border:1px solid #505050;background:radial-gradient(circle at 70% 30%,#f4f4f4,#a0a0a0 80%)"></div>
<div class="a" style="left:704px;top:364px;width:9px;height:9px;border:1px solid #505050;background:radial-gradient(circle at 70% 30%,#f4f4f4,#a0a0a0 80%)"></div>
<div class="a" style="left:965px;top:364px;width:9px;height:9px;border:1px solid #505050;background:radial-gradient(circle at 70% 30%,#f4f4f4,#a0a0a0 80%)"></div>
<div class="a" style="left:704px;top:464px;width:9px;height:9px;border:1px solid #505050;background:radial-gradient(circle at 70% 30%,#f4f4f4,#a0a0a0 80%)"></div>
<div class="a" style="left:834px;top:464px;width:9px;height:9px;border:1px solid #505050;background:radial-gradient(circle at 70% 30%,#f4f4f4,#a0a0a0 80%)"></div>
<div class="a" style="left:965px;top:464px;width:9px;height:9px;border:1px solid #505050;background:radial-gradient(circle at 70% 30%,#f4f4f4,#a0a0a0 80%)"></div>
<div class="a" style="left:984px;top:249px;width:297px;height:182px;background:#fff;border:1px solid #8c8c8c;border-right-color:#c8c8c8;border-bottom-color:#b0b0b0"></div>
<div class="a" style="left:989px;top:253px;width:288px;height:19px;background:#d8fafc;border:1px solid #5fa8b8"></div>
<div class="t" style="left:832.5px;width:600px;text-align:center;top:258.12px;font-size:10.84px;color:#000;font-weight:normal;">Crop and Adjust Properties</div>
<div class="a" style="left:985px;top:275px;width:295px;height:1px;background:#d0d0d0"></div>
<div class="a" style="left:1160px;top:277px;width:1px;height:119px;background:#f2f2f2"></div>
<div class="a" style="left:986px;top:294px;width:294px;height:1px;background:#f2f0f2"></div>
<div class="a" style="left:990px;top:284px;width:4px;height:4px;border-radius:50%;background:#f0f0f0"></div>
<div class="t" style="left:999.4px;top:281.33px;font-size:10.24px;color:#9a9a9a;font-weight:normal;">Media</div>
<div class="t" style="left:1162.6px;top:280.51px;font-size:11.21px;color:#9a9a9a;font-weight:normal;">C:\U...\Background.jpg</div>
<div class="a" style="left:986px;top:311px;width:294px;height:1px;background:#f2f0f2"></div>
<svg class="a" style="left:988px;top:297px;" width="9" height="9" viewBox="0 0 9 9"><rect x="0.5" y="0.5" width="8" height="8" fill="#fff" stroke="#8e8e8e"/><path d="M2 4.5H7" stroke="#333"/><path d="M4.5 2V7" stroke="#333"/></svg>
<div class="t" style="left:999.4px;top:298.08px;font-size:10.54px;color:#000;font-weight:normal;">Brightness</div>
<div class="t" style="left:1162.6px;top:297.73px;font-size:10.95px;color:#000;font-weight:normal;">0.000</div>
<div class="a" style="left:986px;top:328px;width:294px;height:1px;background:#f2f0f2"></div>
<svg class="a" style="left:988px;top:314px;" width="9" height="9" viewBox="0 0 9 9"><rect x="0.5" y="0.5" width="8" height="8" fill="#fff" stroke="#8e8e8e"/><path d="M2 4.5H7" stroke="#333"/><path d="M4.5 2V7" stroke="#333"/></svg>
<div class="t" style="left:999.4px;top:314.57px;font-size:11.14px;color:#000;font-weight:normal;">Contrast</div>
<div class="t" style="left:1162.6px;top:314.73px;font-size:10.95px;color:#000;font-weight:normal;">0.000</div>
<div class="a" style="left:986px;top:345px;width:294px;height:1px;background:#f2f0f2"></div>
<svg class="a" style="left:988px;top:331px;" width="9" height="9" viewBox="0 0 9 9"><rect x="0.5" y="0.5" width="8" height="8" fill="#fff" stroke="#8e8e8e"/><path d="M2 4.5H7" stroke="#333"/><path d="M4.5 2V7" stroke="#333"/></svg>
<div class="t" style="left:999.4px;top:331.64px;font-size:11.06px;color:#000;font-weight:normal;">Contrast center</div>
<div class="t" style="left:1162.6px;top:331.73px;font-size:10.95px;color:#000;font-weight:normal;">0.500</div>
<div class="a" style="left:986px;top:362px;width:294px;height:1px;background:#f2f0f2"></div>
<div class="a" style="left:990px;top:352px;width:4px;height:4px;border-radius:50%;background:#f0f0f0"></div>
<div class="t" style="left:999.4px;top:349.30px;font-size:10.28px;color:#000;font-weight:normal;">Colorize</div>
<div class="a" style="left:986px;top:379px;width:294px;height:1px;background:#f2f0f2"></div>
<div class="a" style="left:990px;top:369px;width:4px;height:4px;border-radius:50%;background:#f0f0f0"></div>
<div class="t" style="left:999.4px;top:366.13px;font-size:10.48px;color:#000;font-weight:normal;">Alpha</div>
<div class="t" style="left:1162.6px;top:366.10px;font-size:10.51px;color:#000;font-weight:normal;">1.000</div>
<div class="a" style="left:986px;top:396px;width:294px;height:1px;background:#f2f0f2"></div>
<svg class="a" style="left:988px;top:382px;" width="9" height="9" viewBox="0 0 9 9"><rect x="0.5" y="0.5" width="8" height="8" fill="#fff" stroke="#8e8e8e"/><path d="M2 4.5H7" stroke="#333"/><path d="M4.5 2V7" stroke="#333"/></svg>
<div class="t" style="left:999.4px;top:382.46px;font-size:11.27px;color:#000;font-weight:bold;">Crop</div>
<div class="a" style="left:1168px;top:349px;width:105px;height:9px;border:1px solid #222;background-color:#fff;background-image:linear-gradient(45deg,#555 25%,transparent 25%,transparent 75%,#555 75%),linear-gradient(45deg,#555 25%,transparent 25%,transparent 75%,#555 75%);background-size:8px 8px;background-position:0 0,4px 4px"></div>
<div class="a" style="left:984px;top:436px;width:297px;height:51px;border-top:1px solid #b4b4b4;border-left:1px solid #e0e0e0"></div>
<div class="a" style="left:699px;top:488px;width:582px;height:1px;background:#c8c8c8"></div>
<div class="t" style="right:838px;top:493.14px;font-size:9.28px;color:#222;font-weight:normal;">00:00:00:00</div>
<div class="a" style="left:699px;top:505px;width:128px;height:33px;border:1px solid #a8a8a8;background:#f6f2f5"></div>
<div class="a" style="left:700px;top:521px;width:126px;height:1px;background:#a8a8a8"></div>
<div class="t" style="left:706.5px;top:508.91px;font-size:10.38px;color:#000;font-weight:normal;">Crop</div>
<div class="t" style="left:706.5px;top:524.67px;font-size:10.67px;color:#000;font-weight:normal;">Video Effects</div>
<div class="a" style="left:834px;top:488px;width:1px;height:97px;background:#c4c4c4"></div>
<div class="a" style="left:835px;top:489px;width:405px;height:16px;background:#f6f2f5"></div>
<div class="t" style="left:837px;top:493.14px;font-size:9.28px;color:#222;font-weight:normal;">00:00:00:00</div>
<div class="a" style="left:876px;top:501px;width:1px;height:4px;background:#555"></div>
<div class="t" style="left:918px;top:493.14px;font-size:9.28px;color:#222;font-weight:normal;">00:00:00:02</div>
<div class="a" style="left:917px;top:497px;width:1px;height:8px;background:#555"></div>
<div class="a" style="left:957px;top:501px;width:1px;height:4px;background:#555"></div>
<div class="t" style="left:999px;top:493.14px;font-size:9.28px;color:#222;font-weight:normal;">00:00:00:04</div>
<div class="a" style="left:998px;top:497px;width:1px;height:8px;background:#555"></div>
<div class="a" style="left:1038px;top:501px;width:1px;height:4px;background:#555"></div>
<div class="t" style="left:1080px;top:493.14px;font-size:9.28px;color:#222;font-weight:normal;">00:00:00:06</div>
<div class="a" style="left:1079px;top:497px;width:1px;height:8px;background:#555"></div>
<div class="a" style="left:1119px;top:501px;width:1px;height:4px;background:#555"></div>
<div class="t" style="left:1161px;top:493.14px;font-size:9.28px;color:#222;font-weight:normal;">00:00:00:08</div>
<div class="a" style="left:1160px;top:497px;width:1px;height:8px;background:#555"></div>
<div class="a" style="left:1200px;top:501px;width:1px;height:4px;background:#555"></div>
<div class="a" style="left:835px;top:505px;width:405px;height:1px;background:#9a9a9a"></div>
<div class="a" style="left:1240px;top:489px;width:24px;height:48px;background:#b4b4b4"></div>
<div class="t" style="left:1241px;top:492.87px;font-size:9.6px;color:#555;font-weight:normal;">00:0(</div>
<div class="a" style="left:835px;top:521px;width:405px;height:1px;background:#a8a8a8"></div>
<div class="a" style="left:835px;top:537px;width:429px;height:1px;background:#a8a8a8"></div>
<div class="a" style="left:835px;top:505px;width:1px;height:33px;background:#222"></div>
<svg class="a" style="left:1269px;top:494px;" width="8" height="5" viewBox="0 0 8 5"><path d="M0 5L4 0L8 5Z" fill="#444"/></svg>
<svg class="a" style="left:1269px;top:527px;" width="8" height="5" viewBox="0 0 8 5"><path d="M0 0L4 5L8 0Z" fill="#444"/></svg>
<div class="a" style="left:836px;top:540px;width:388px;height:14px;background:#f0eef0"></div>
<svg class="a" style="left:840px;top:543px;" width="5" height="8" viewBox="0 0 5 8"><path d="M5 0L0 4L5 8Z" fill="#333"/></svg>
<div class="a" style="left:853px;top:540px;width:352px;height:14px;border:1px solid #a0a0a0;border-radius:2px;background:linear-gradient(#f4f4f4,#dcdcdc 60%,#c8c8c8)"></div>
<svg class="a" style="left:856px;top:543px;" width="5" height="7" viewBox="0 0 5 7"><path d="M0.5 0V7M3.5 0V7" stroke="#777"/></svg>
<svg class="a" style="left:1199px;top:543px;" width="5" height="7" viewBox="0 0 5 7"><path d="M0.5 0V7M3.5 0V7" stroke="#777"/></svg>
<svg class="a" style="left:1212px;top:543px;" width="5" height="8" viewBox="0 0 5 8"><path d="M0 0L5 4L0 8Z" fill="#333"/></svg>
<div class="a" style="left:1225px;top:540px;width:15px;height:14px;border:1px solid #a0a0a0;background:linear-gradient(#f4f4f4,#d8d8d8)"></div>
<svg class="a" style="left:1228px;top:543px;" width="9" height="8" viewBox="0 0 9 8"><path d="M4.5 0.5V7.5M1 4H8" stroke="#111" stroke-width="2"/></svg>
<div class="a" style="left:1241px;top:540px;width:6px;height:14px;border:1px solid #b0b0b0;background:#e8e8e8"></div>
<div class="a" style="left:1248px;top:540px;width:15px;height:14px;border:1px solid #a0a0a0;background:linear-gradient(#f4f4f4,#d8d8d8)"></div>
<svg class="a" style="left:1251px;top:543px;" width="9" height="8" viewBox="0 0 9 8"><path d="M1 4H8" stroke="#111" stroke-width="2"/></svg>
<div class="a" style="left:1264px;top:537px;width:17px;height:17px;border-left:1px solid #d0d0d0;border-bottom:1px solid #c8c8c8"></div>
<svg class="a" style="left:843px;top:561px;" width="17" height="17" viewBox="0 0 17 17"><path d="M8.5 1.5L15.5 8.5L8.5 15.5L1.5 8.5Z" fill="none" stroke="#c0c0c0" stroke-width="1.2"/><path d="M5 8.5H12M5 8.5L7.5 6M5 8.5L7.5 11M1.5 4V13" stroke="#c0c0c0" stroke-width="1.2" fill="none"/></svg>
<svg class="a" style="left:867px;top:561px;" width="17" height="17" viewBox="0 0 17 17"><path d="M8.5 1.5L15.5 8.5L8.5 15.5L1.5 8.5Z" fill="none" stroke="#c0c0c0" stroke-width="1.2"/><path d="M5 8.5H12M5 8.5L7.5 6M5 8.5L7.5 11" stroke="#c0c0c0" stroke-width="1.2" fill="none"/></svg>
<svg class="a" style="left:891px;top:561px;" width="17" height="17" viewBox="0 0 17 17"><path d="M8.5 1.5L15.5 8.5L8.5 15.5L1.5 8.5Z" fill="none" stroke="#c0c0c0" stroke-width="1.2"/><path d="M5 8.5H12M12 8.5L9.5 6M12 8.5L9.5 11" stroke="#c0c0c0" stroke-width="1.2" fill="none"/></svg>
<svg class="a" style="left:915px;top:561px;" width="17" height="17" viewBox="0 0 17 17"><path d="M8.5 1.5L15.5 8.5L8.5 15.5L1.5 8.5Z" fill="none" stroke="#c0c0c0" stroke-width="1.2"/><path d="M5 8.5H12M12 8.5L9.5 6M12 8.5L9.5 11M15.5 4V13" stroke="#c0c0c0" stroke-width="1.2" fill="none"/></svg>
<svg class="a" style="left:947px;top:561px;" width="17" height="17" viewBox="0 0 17 17"><path d="M8.5 1.5L15.5 8.5L8.5 15.5L1.5 8.5Z" fill="none" stroke="#5858a0" stroke-width="1.2"/><path d="M8.5 5V12M5 8.5H12" stroke="#5858a0" stroke-width="1.6"/></svg>
<svg class="a" style="left:971px;top:561px;" width="17" height="17" viewBox="0 0 17 17"><path d="M8.5 1.5L15.5 8.5L8.5 15.5L1.5 8.5Z" fill="none" stroke="#c0c0c0" stroke-width="1.2"/><path d="M5 8.5H12" stroke="#c0c0c0" stroke-width="1.4"/></svg>
<div class="a" style="left:938px;top:560px;width:1px;height:19px;background:#8a8a8a"></div>
<div class="a" style="left:1401px;top:73px;width:270px;height:678px;border:1px solid #a6a6a6;border-right:none;border-bottom:none"></div>
<div class="a" style="left:1614px;top:80px;width:4px;height:4px;border-radius:50%;background:#555"></div>
<div class="a" style="left:1619px;top:80px;width:4px;height:4px;border-radius:50%;background:#555"></div>
<div class="a" style="left:1624px;top:80px;width:4px;height:4px;border-radius:50%;background:#555"></div>
<div class="a" style="left:1629px;top:80px;width:4px;height:4px;border-radius:50%;background:#555"></div>
<div class="a" style="left:1634px;top:80px;width:4px;height:4px;border-radius:50%;background:#555"></div>
<div class="a" style="left:1639px;top:80px;width:4px;height:4px;border-radius:50%;background:#555"></div>
<svg class="a" style="left:1652px;top:79px;" width="8" height="5" viewBox="0 0 8 5"><path d="M0 5L4 0L8 5Z" fill="#333"/></svg>
<div class="a" style="left:1406px;top:93px;width:258px;height:24px;background:#a2b6cc;border-bottom:1px solid #8a9cb0"></div>
<div class="t" style="left:1411px;top:99.45px;font-size:11.64px;color:#1a2530;font-weight:normal;">Menu Page Properties</div>
<div class="a" style="left:1406px;top:117px;width:258px;height:71px;background:#f6f2f5"></div>
<div class="a" style="left:1411px;top:120px;width:125px;height:19px;background:#c8fafc;border:1px solid #4a9aae"></div>
<div class="t" style="left:1172.5px;width:600px;text-align:center;top:125.00px;font-size:10.4px;color:#000;font-weight:normal;">General</div>
<div class="t" style="left:1303.6px;width:600px;text-align:center;top:124.88px;font-size:10.54px;color:#000;font-weight:normal;">Background Media</div>
<div class="a" style="left:1407px;top:141px;width:257px;height:1px;background:#e0dde0"></div>
<div class="t" style="left:1172.5px;width:600px;text-align:center;top:148.47px;font-size:10.67px;color:#000;font-weight:normal;">End Action</div>
<div class="t" style="left:1304px;width:600px;text-align:center;top:148.29px;font-size:10.88px;color:#000;font-weight:normal;">Remote Buttons</div>
<div class="a" style="left:1407px;top:164px;width:257px;height:1px;background:#e0dde0"></div>
<div class="t" style="left:1172.5px;width:600px;text-align:center;top:171.01px;font-size:10.5px;color:#000;font-weight:normal;">Color Sets</div>
<div class="a" style="left:1538px;top:143px;width:1px;height:44px;background:#dcd8dc"></div>
<div class="a" style="left:1538px;top:120px;width:1px;height:19px;background:#dcd8dc"></div>
<div class="a" style="left:1406px;top:187px;width:258px;height:1px;background:#8c8c8c"></div>
<div class="a" style="left:1406px;top:188px;width:258px;height:502px;background:#fff;border-left:1px solid #8c8c8c;border-bottom:1px solid #8c8c8c"></div>
<div class="a" style="left:1563px;top:189px;width:1px;height:136px;background:#f0f0f0"></div>
<div class="a" style="left:1413px;top:197px;width:4px;height:4px;border-radius:50%;background:#eeeeee"></div>
<div class="t" style="left:1421.4px;top:193.99px;font-size:10.64px;color:#000;font-weight:normal;">Reduce interlace flicker</div>
<div class="t" style="left:1566.7px;top:193.35px;font-size:11.4px;color:#000;font-weight:normal;">Off</div>
<div class="a" style="left:1417px;top:207px;width:247px;height:1px;background:#f0eef0"></div>
<div class="a" style="left:1413px;top:214px;width:4px;height:4px;border-radius:50%;background:#eeeeee"></div>
<div class="t" style="left:1421.4px;top:210.76px;font-size:10.92px;color:#000;font-weight:normal;">Start Script</div>
<div class="t" style="left:1566.7px;top:211.29px;font-size:10.29px;color:#000;font-weight:normal;">None</div>
<div class="a" style="left:1417px;top:224px;width:247px;height:1px;background:#f0eef0"></div>
<div class="a" style="left:1413px;top:231px;width:4px;height:4px;border-radius:50%;background:#eeeeee"></div>
<div class="t" style="left:1421.4px;top:227.97px;font-size:10.67px;color:#000;font-weight:normal;">Menu length</div>
<div class="t" style="left:1566.7px;top:227.90px;font-size:10.75px;color:#000;font-weight:normal;">Auto calculate</div>
<div class="a" style="left:1417px;top:241px;width:247px;height:1px;background:#f0eef0"></div>
<div class="a" style="left:1413px;top:248px;width:4px;height:4px;border-radius:50%;background:#eeeeee"></div>
<div class="t" style="left:1421.4px;top:244.98px;font-size:10.66px;color:#8a8a8a;font-weight:normal;">Length</div>
<div class="t" style="left:1566.7px;top:244.44px;font-size:11.29px;color:#8a8a8a;font-weight:normal;">00:00:00.400</div>
<div class="a" style="left:1417px;top:258px;width:247px;height:1px;background:#f0eef0"></div>
<div class="a" style="left:1413px;top:265px;width:4px;height:4px;border-radius:50%;background:#eeeeee"></div>
<div class="t" style="left:1421.4px;top:261.96px;font-size:10.68px;color:#8a8a8a;font-weight:normal;">Loop point</div>
<div class="t" style="left:1566.7px;top:261.44px;font-size:11.29px;color:#8a8a8a;font-weight:normal;">00:00:00.000</div>
<div class="a" style="left:1417px;top:275px;width:247px;height:1px;background:#f0eef0"></div>
<div class="a" style="left:1413px;top:282px;width:4px;height:4px;border-radius:50%;background:#eeeeee"></div>
<div class="t" style="left:1421.4px;top:278.85px;font-size:10.81px;color:#000;font-weight:normal;">Selected button colors</div>
<div class="t" style="left:1566.7px;top:278.93px;font-size:10.71px;color:#000;font-weight:normal;">Color set 1</div>
<div class="a" style="left:1417px;top:292px;width:247px;height:1px;background:#f0eef0"></div>
<div class="a" style="left:1413px;top:299px;width:4px;height:4px;border-radius:50%;background:#eeeeee"></div>
<div class="t" style="left:1421.4px;top:295.65px;font-size:11.05px;color:#000;font-weight:normal;">Activated button colors</div>
<div class="t" style="left:1566.7px;top:295.90px;font-size:10.75px;color:#000;font-weight:normal;">Color set 2</div>
<div class="a" style="left:1417px;top:309px;width:247px;height:1px;background:#f0eef0"></div>
<div class="a" style="left:1413px;top:316px;width:4px;height:4px;border-radius:50%;background:#eeeeee"></div>
<div class="t" style="left:1421.4px;top:312.60px;font-size:11.1px;color:#000;font-weight:normal;">Inactive button colors</div>
<div class="t" style="left:1566.7px;top:312.82px;font-size:10.84px;color:#000;font-weight:normal;">None (all transpar…</div>
<div class="a" style="left:1417px;top:326px;width:247px;height:1px;background:#f0eef0"></div>
<div class="a" style="left:2px;top:752px;width:1662px;height:1px;background:#ffffff"></div>
<div class="a" style="left:2px;top:758px;width:496px;height:267px;border:1px solid #a6a6a6;border-bottom:none"></div>
<svg class="a" style="left:7px;top:762px;" width="7" height="7" viewBox="0 0 7 7"><path d="M0.5 0.5L6.5 6.5M6.5 0.5L0.5 6.5" stroke="#333" stroke-width="1.5"/></svg>
<svg class="a" style="left:8px;top:776px;" width="5" height="7" viewBox="0 0 5 7"><path d="M5 0L0 3.5L5 7Z" fill="#444"/></svg>
<div class="a" style="left:8px;top:794px;width:4px;height:4px;border-radius:50%;background:#555"></div>
<div class="a" style="left:8px;top:799px;width:4px;height:4px;border-radius:50%;background:#555"></div>
<div class="a" style="left:8px;top:804px;width:4px;height:4px;border-radius:50%;background:#555"></div>
<div class="a" style="left:8px;top:809px;width:4px;height:4px;border-radius:50%;background:#555"></div>
<div class="a" style="left:8px;top:814px;width:4px;height:4px;border-radius:50%;background:#555"></div>
<div class="a" style="left:8px;top:819px;width:4px;height:4px;border-radius:50%;background:#555"></div>
<div class="a" style="left:22px;top:763px;width:224px;height:24px;border:1px solid #c0c0c0;border-radius:2px;background:linear-gradient(#fff,#f4f4f4)"></div>
<svg class="a" style="left:25px;top:766px;" width="16" height="16" viewBox="0 0 16 16"><rect x="0.5" y="1.5" width="14" height="14" fill="#4a6a6a" stroke="#2a3a3a"/><path d="M1.5 14.5L14.5 1.5" stroke="#c8d8c8" stroke-width="0"/><rect x="2" y="3" width="11" height="11" fill="#d8dccc"/><path d="M4 12L7 9L12 2" stroke="#7a6a30" stroke-width="2"/><path d="M3 9L6 12" stroke="#333" stroke-width="1.2"/><rect x="3" y="8" width="6" height="5" fill="#fff" stroke="#333" stroke-width="0.8" transform="rotate(-40 6 10)"/></svg>
<div class="t" style="left:46px;top:770.52px;font-size:11.67px;color:#000;font-weight:normal;">Desktop</div>
<svg class="a" style="left:233px;top:774px;" width="7" height="4" viewBox="0 0 7 4"><path d="M0 0H7L3.5 4Z" fill="#000"/></svg>
<svg class="a" style="left:251px;top:766px;" width="17" height="16" viewBox="0 0 17 16"><path d="M0.5 3.5H6L7.5 5H16.5V15.5H0.5Z" fill="#e0cc88" stroke="#a08a40"/><path d="M8 13V7M5 9L8 6L11 9" stroke="#333" stroke-width="1.5" fill="none"/></svg>
<svg class="a" style="left:275px;top:766px;" width="15" height="16" viewBox="0 0 15 16"><rect x="0.5" y="0.5" width="14" height="15" fill="#d8dcf0" stroke="#8890b8"/><path d="M4 6A4 4 0 0 1 11 5M11 10A4 4 0 0 1 4 11" stroke="#223" stroke-width="1.8" fill="none"/><path d="M9 2L12 5L9 7Z M6 9L3 11L6 14Z" fill="#223"/></svg>
<div class="a" style="left:297px;top:765px;width:1px;height:18px;background:#9a9a9a"></div>
<svg class="a" style="left:305px;top:767px;" width="16" height="14" viewBox="0 0 16 14"><path d="M0.5 3.5H5L6.5 5H13.5V13.5H0.5Z" fill="#d0d0d0" stroke="#b0b0b0"/><path d="M12 0V8M8 4H16" stroke="#b8b8b8" stroke-width="1.2"/></svg>
<svg class="a" style="left:328px;top:766px;" width="15" height="16" viewBox="0 0 15 16"><path d="M1.5 1.5L13.5 14.5M13.5 1.5L1.5 14.5" stroke="#b4b4b4" stroke-width="2.4"/></svg>
<svg class="a" style="left:351px;top:767px;" width="16" height="14" viewBox="0 0 16 14"><path d="M0.5 2.5H6L7.5 4H15.5V13.5H0.5Z" fill="#d4d4d4" stroke="#b4b4b4"/></svg>
<div class="a" style="left:374px;top:765px;width:1px;height:18px;background:#9a9a9a"></div>
<svg class="a" style="left:385px;top:767px;" width="14" height="13" viewBox="0 0 14 13"><path d="M1 0.5L13 6.5L1 12.5Z" fill="#aaa" stroke="#999"/></svg>
<svg class="a" style="left:406px;top:768px;" width="11" height="11" viewBox="0 0 11 11"><rect x="0.5" y="0.5" width="10" height="10" fill="#9e9e9e" stroke="#8a8a8a"/></svg>
<div class="a" style="left:425px;top:764px;width:24px;height:21px;border:1px solid #6a6a6a;border-radius:3px;background:linear-gradient(#e6e6e6,#d2d2d2)"></div>
<svg class="a" style="left:430px;top:766px;" width="15" height="17" viewBox="0 0 15 17"><path d="M6 1V9" stroke="#333"/><path d="M6 1L12 3L6 5Z" fill="#2a8a4a"/><path d="M2 7L10 11L7 12L9.5 15.5L8 16.5L5.5 13L4 15Z" fill="#eee" stroke="#222" stroke-width="0.9"/></svg>
<div class="a" style="left:451px;top:765px;width:1px;height:18px;background:#9a9a9a"></div>
<svg class="a" style="left:460px;top:767px;" width="15" height="14" viewBox="0 0 15 14"><rect x="0.5" y="0.5" width="14" height="13" fill="#e8eaf4" stroke="#5a6080"/><path d="M3 3.5H6M3 6.5H6M3 9.5H6M8 3.5H12M8 6.5H12M8 9.5H12" stroke="#334" stroke-width="1.3"/></svg>
<svg class="a" style="left:483px;top:772px;" width="7" height="4" viewBox="0 0 7 4"><path d="M0 0H7L3.5 4Z" fill="#000"/></svg>
<div class="a" style="left:22px;top:788px;width:180px;height:211px;background:#fff;border:1px solid #8c8c8c"></div>
<svg class="a" style="left:27px;top:795px;" width="16" height="16" viewBox="0 0 16 16"><rect x="0.5" y="1.5" width="14" height="14" fill="#4a6a6a" stroke="#2a3a3a"/><path d="M1.5 14.5L14.5 1.5" stroke="#c8d8c8" stroke-width="0"/><rect x="2" y="3" width="11" height="11" fill="#d8dccc"/><path d="M4 12L7 9L12 2" stroke="#7a6a30" stroke-width="2"/><path d="M3 9L6 12" stroke="#333" stroke-width="1.2"/><rect x="3" y="8" width="6" height="5" fill="#fff" stroke="#333" stroke-width="0.8" transform="rotate(-40 6 10)"/></svg>
<div class="t" style="left:48px;top:793.47px;font-size:11.61px;color:#000;font-weight:normal;">Desktop</div>
<div class="a" style="left:36px;top:812px;width:1px;height:57px;border-left:1px dotted #8a8a8a"></div>
<div class="a" style="left:37px;top:821px;width:8px;height:1px;border-top:1px dotted #8a8a8a"></div>
<div class="a" style="left:37px;top:839px;width:8px;height:1px;border-top:1px dotted #8a8a8a"></div>
<div class="a" style="left:37px;top:857px;width:8px;height:1px;border-top:1px dotted #8a8a8a"></div>
<div class="a" style="left:37px;top:875px;width:8px;height:1px;border-top:1px dotted #8a8a8a"></div>
<svg class="a" style="left:31px;top:816px;" width="9" height="9" viewBox="0 0 9 9"><rect x="0.5" y="0.5" width="8" height="8" fill="#fff" stroke="#8e8e8e"/><path d="M2 4.5H7" stroke="#333"/><path d="M4.5 2V7" stroke="#333"/></svg>
<svg class="a" style="left:31px;top:852px;" width="9" height="9" viewBox="0 0 9 9"><rect x="0.5" y="0.5" width="8" height="8" fill="#fff" stroke="#8e8e8e"/><path d="M2 4.5H7" stroke="#333"/><path d="M4.5 2V7" stroke="#333"/></svg>
<svg class="a" style="left:46px;top:810px;" width="17" height="17" viewBox="0 0 17 17"><rect x="1.5" y="0.5" width="13" height="10.5" rx="1" fill="#d8dde6" stroke="#333"/><rect x="3.5" y="2.5" width="9" height="6.5" fill="#5aa8d8" stroke="#2a4a6a" stroke-width="0.6"/><path d="M4 3.5L8 3.5" stroke="#b8e0f8"/><rect x="0.5" y="12.5" width="15" height="3.5" rx="0.8" fill="#c8ccd4" stroke="#333" stroke-width="0.9"/><path d="M3 14.2H12" stroke="#666" stroke-width="0.8"/></svg>
<div class="t" style="left:67.3px;top:810.60px;font-size:12.28px;color:#000;font-weight:normal;">Computer</div>
<svg class="a" style="left:46px;top:828px;" width="16" height="17" viewBox="0 0 16 17"><path d="M1 2L6 0.5V16L1 16.5Z" fill="#4a9a8a"/><rect x="5.5" y="0.5" width="9" height="15" fill="#f4f8fa" stroke="#9aaab8"/><path d="M7.5 4H12.5M7.5 6.5H12.5M7.5 9H12.5M10 3V10" stroke="#b8c4d8" stroke-width="0.8"/><path d="M1 16.5L6 16" stroke="#2a6a5a"/></svg>
<div class="t" style="left:67.3px;top:828.91px;font-size:11.92px;color:#000;font-weight:normal;">Documents</div>
<svg class="a" style="left:46px;top:846px;" width="17" height="17" viewBox="0 0 17 17"><rect x="0.5" y="4.5" width="9" height="7" fill="#d8dde6" stroke="#333"/><rect x="2" y="6" width="6" height="4" fill="#6ab0d8"/><rect x="8.5" y="1.5" width="8" height="6" fill="#d8dde6" stroke="#333"/><rect x="10" y="3" width="5" height="3" fill="#6ab0d8"/><circle cx="4" cy="3" r="2.6" fill="#4aa85a" stroke="#2a6a3a" stroke-width="0.6"/><rect x="0.5" y="12.5" width="10" height="3" fill="#c8ccd4" stroke="#333" stroke-width="0.8"/><path d="M12 8V13H16" stroke="#333"/></svg>
<div class="t" style="left:67.3px;top:846.66px;font-size:12.22px;color:#000;font-weight:normal;">Network</div>
<svg class="a" style="left:46px;top:864px;" width="17" height="16" viewBox="0 0 17 16"><path d="M0.5 2.5C0.5 1.8 1 1.5 1.5 1.5H6L7.5 3H15.5C16 3 16.5 3.3 16.5 4V14.5H0.5Z" fill="#ece0b0" stroke="#8a7a48" stroke-width="0.9"/><rect x="2" y="5" width="13" height="8.5" fill="#f6f0d4"/><path d="M8.5 6V12.5M5.5 9.2H11.5M6.4 7L10.6 11.4M10.6 7L6.4 11.4" stroke="#3a48b8" stroke-width="1.1"/></svg>
<div class="t" style="left:67.3px;top:865.43px;font-size:11.31px;color:#000;font-weight:normal;">Favorites</div>
<div class="a" style="left:210px;top:788px;width:284px;height:183px;background:#fff;border:1px solid #8c8c8c"></div>
<svg class="a" style="left:212px;top:791px;" width="17" height="17" viewBox="0 0 17 17"><rect x="1.5" y="0.5" width="13" height="10.5" rx="1" fill="#d8dde6" stroke="#333"/><rect x="3.5" y="2.5" width="9" height="6.5" fill="#5aa8d8" stroke="#2a4a6a" stroke-width="0.6"/><path d="M4 3.5L8 3.5" stroke="#b8e0f8"/><rect x="0.5" y="12.5" width="15" height="3.5" rx="0.8" fill="#c8ccd4" stroke="#333" stroke-width="0.9"/><path d="M3 14.2H12" stroke="#666" stroke-width="0.8"/></svg>
<div class="t" style="left:230px;top:792.59px;font-size:12.3px;color:#000;font-weight:normal;">Computer</div>
<svg class="a" style="left:212px;top:808px;" width="16" height="17" viewBox="0 0 16 17"><path d="M1 2L6 0.5V16L1 16.5Z" fill="#4a9a8a"/><rect x="5.5" y="0.5" width="9" height="15" fill="#f4f8fa" stroke="#9aaab8"/><path d="M7.5 4H12.5M7.5 6.5H12.5M7.5 9H12.5M10 3V10" stroke="#b8c4d8" stroke-width="0.8"/><path d="M1 16.5L6 16" stroke="#2a6a5a"/></svg>
<div class="t" style="left:230px;top:809.84px;font-size:12.0px;color:#000;font-weight:normal;">Documents</div>
<svg class="a" style="left:212px;top:825px;" width="17" height="17" viewBox="0 0 17 17"><rect x="0.5" y="4.5" width="9" height="7" fill="#d8dde6" stroke="#333"/><rect x="2" y="6" width="6" height="4" fill="#6ab0d8"/><rect x="8.5" y="1.5" width="8" height="6" fill="#d8dde6" stroke="#333"/><rect x="10" y="3" width="5" height="3" fill="#6ab0d8"/><circle cx="4" cy="3" r="2.6" fill="#4aa85a" stroke="#2a6a3a" stroke-width="0.6"/><rect x="0.5" y="12.5" width="10" height="3" fill="#c8ccd4" stroke="#333" stroke-width="0.8"/><path d="M12 8V13H16" stroke="#333"/></svg>
<div class="t" style="left:230px;top:826.66px;font-size:12.22px;color:#000;font-weight:normal;">Network</div>
<svg class="a" style="left:212px;top:842px;" width="17" height="16" viewBox="0 0 17 16"><path d="M0.5 2.5C0.5 1.8 1 1.5 1.5 1.5H6L7.5 3H15.5C16 3 16.5 3.3 16.5 4V14.5H0.5Z" fill="#ece0b0" stroke="#8a7a48" stroke-width="0.9"/><rect x="2" y="5" width="13" height="8.5" fill="#f6f0d4"/><path d="M8.5 6V12.5M5.5 9.2H11.5M6.4 7L10.6 11.4M10.6 7L6.4 11.4" stroke="#3a48b8" stroke-width="1.1"/></svg>
<div class="t" style="left:230px;top:844.41px;font-size:11.33px;color:#000;font-weight:normal;">Favorites</div>
<div class="t" style="left:230px;top:861.06px;font-size:11.74px;color:#000;font-weight:normal;">CD-LabelPrint</div>
<div class="t" style="left:230px;top:878.15px;font-size:11.64px;color:#000;font-weight:normal;">Clip Browser</div>
<svg class="a" style="left:212px;top:893px;" width="16" height="17" viewBox="0 0 16 17"><path d="M1 2L6 0.5V16L1 16.5Z" fill="#4a9a8a"/><rect x="5.5" y="0.5" width="9" height="15" fill="#f4f8fa" stroke="#9aaab8"/><path d="M7.5 4H12.5M7.5 6.5H12.5M7.5 9H12.5M10 3V10" stroke="#b8c4d8" stroke-width="0.8"/><path d="M1 16.5L6 16" stroke="#2a6a5a"/></svg>
<div class="t" style="left:230px;top:894.76px;font-size:12.1px;color:#000;font-weight:normal;">Documents - Shortcut</div>
<svg class="a" style="left:212px;top:910px;" width="16" height="17" viewBox="0 0 16 17"><path d="M1 2L6 0.5V16L1 16.5Z" fill="#4a9a8a"/><rect x="5.5" y="0.5" width="9" height="15" fill="#f4f8fa" stroke="#9aaab8"/><path d="M7.5 4H12.5M7.5 6.5H12.5M7.5 9H12.5M10 3V10" stroke="#b8c4d8" stroke-width="0.8"/><path d="M1 16.5L6 16" stroke="#2a6a5a"/></svg>
<div class="t" style="left:230px;top:911.77px;font-size:12.08px;color:#000;font-weight:normal;">Documents - Shortcut - Copy</div>
<div class="t" style="left:230px;top:929.12px;font-size:11.67px;color:#000;font-weight:normal;">Internet Explorer</div>
<svg class="a" style="left:212px;top:861px;" width="17" height="17" viewBox="0 0 17 17"><circle cx="8" cy="9" r="7.3" fill="#d4d4d8" stroke="#9a9aa0" stroke-width="0.8"/><path d="M2 6L5 3H15V8H9Z" fill="#2a58d0"/><path d="M6 4.5H13M7 6.5H13" stroke="#8ab0f8" stroke-width="0.8"/><circle cx="8" cy="9" r="1.8" fill="#fff" stroke="#999" stroke-width="0.6"/></svg>
<svg class="a" style="left:212px;top:878px;" width="17" height="16" viewBox="0 0 17 16"><circle cx="4.5" cy="5" r="3" fill="#1a1a1a"/><circle cx="10.5" cy="4" r="3" fill="#1a1a1a"/><path d="M1 8H12L15 6.5V12.5L12 11V13H1Z" fill="#151515"/><rect x="3" y="13" width="13" height="2.5" fill="#b8b8b8"/></svg>
<svg class="a" style="left:212px;top:927px;" width="17" height="17" viewBox="0 0 17 17"><path d="M14.5 10.5H5.5C5.8 13 8 14 10 14C12 14 13.5 13 14.2 12" fill="none" stroke="#1e74d0" stroke-width="2.6"/><path d="M3 9C3 5 6 3 9 3C12.5 3 15 5.5 15 9.5H5.2" fill="none" stroke="#1e74d0" stroke-width="2.6"/><path d="M2 15C0 12 6 4 16 1" fill="none" stroke="#e8b020" stroke-width="1.3"/></svg>
<svg class="a" style="left:396px;top:791px;" width="17" height="16" viewBox="0 0 17 16"><path d="M1.5 9.5L3.5 6.5H13.5L15.5 9.5Z" fill="#ececec" stroke="#666" stroke-width="0.8"/><rect x="0.5" y="9.5" width="16" height="5" rx="1.5" fill="#d8d8d8" stroke="#444" stroke-width="0.9"/><rect x="11.5" y="11" width="2" height="2" fill="#555"/><path d="M2.5 11.5H9" stroke="#999" stroke-width="0.8"/></svg>
<div class="t" style="left:414px;top:792.84px;font-size:12px;color:#000;font-weight:normal;">New Volume (J</div>
<svg class="a" style="left:396px;top:808px;" width="17" height="16" viewBox="0 0 17 16"><path d="M1.5 9.5L3.5 6.5H13.5L15.5 9.5Z" fill="#ececec" stroke="#666" stroke-width="0.8"/><rect x="0.5" y="9.5" width="16" height="5" rx="1.5" fill="#d8d8d8" stroke="#444" stroke-width="0.9"/><rect x="11.5" y="11" width="2" height="2" fill="#555"/><path d="M2.5 11.5H9" stroke="#999" stroke-width="0.8"/></svg>
<div class="t" style="left:414px;top:809.84px;font-size:12px;color:#000;font-weight:normal;">New Volume (J</div>
<div class="t" style="left:414px;top:827.55px;font-size:11.16px;color:#000;font-weight:normal;">PagePlus 11</div>
<svg class="a" style="left:396px;top:842px;" width="17" height="16" viewBox="0 0 17 16"><path d="M1.5 9.5L3.5 6.5H13.5L15.5 9.5Z" fill="#ececec" stroke="#666" stroke-width="0.8"/><rect x="0.5" y="9.5" width="16" height="5" rx="1.5" fill="#d8d8d8" stroke="#444" stroke-width="0.9"/><rect x="11.5" y="11" width="2" height="2" fill="#555"/><path d="M2.5 11.5H9" stroke="#999" stroke-width="0.8"/></svg>
<div class="t" style="left:414px;top:844.49px;font-size:11.24px;color:#000;font-weight:normal;">Seagate Drive</div>
<svg class="a" style="left:396px;top:859px;" width="17" height="16" viewBox="0 0 17 16"><path d="M1.5 9.5L3.5 6.5H13.5L15.5 9.5Z" fill="#ececec" stroke="#666" stroke-width="0.8"/><rect x="0.5" y="9.5" width="16" height="5" rx="1.5" fill="#d8d8d8" stroke="#444" stroke-width="0.9"/><rect x="11.5" y="11" width="2" height="2" fill="#555"/><path d="M2.5 11.5H9" stroke="#999" stroke-width="0.8"/></svg>
<div class="t" style="left:414px;top:860.84px;font-size:12px;color:#000;font-weight:normal;">Seagate Drive (</div>
<div class="t" style="left:414px;top:878.55px;font-size:11.16px;color:#000;font-weight:normal;">Services</div>
<div class="t" style="left:414px;top:895.05px;font-size:11.76px;color:#000;font-weight:normal;">System Config</div>
<div class="t" style="left:414px;top:911.84px;font-size:12px;color:#000;font-weight:normal;">Windows Live I</div>
<div class="a" style="left:410px;top:788px;width:83px;height:160px;background:transparent"></div>
<svg class="a" style="left:396px;top:825px;" width="16" height="16" viewBox="0 0 16 16"><defs><linearGradient id="ppg" x1="0" y1="0" x2="1" y2="1"><stop offset="0" stop-color="#3a4a6a"/><stop offset="1" stop-color="#6a8ab0"/></linearGradient></defs><rect x="0" y="0" width="16" height="16" fill="url(#ppg)"/><path d="M16 16L2 4M16 16L6 1M16 16L11 0M16 16L0 9M16 16L0 13" stroke="#f0f6ff" stroke-width="1.1"/></svg>
<svg class="a" style="left:396px;top:876px;" width="17" height="17" viewBox="0 0 17 17"><circle cx="7.5" cy="7.5" r="5.3" fill="none" stroke="#7aa8e0" stroke-width="3.2" stroke-dasharray="2.2 1.4"/><circle cx="7.5" cy="7.5" r="3.2" fill="#f0f6ff" stroke="#9ab8e0"/><circle cx="13" cy="13" r="3" fill="none" stroke="#8aa8c8" stroke-width="1.6" stroke-dasharray="1.3 1"/></svg>
<svg class="a" style="left:396px;top:893px;" width="17" height="17" viewBox="0 0 17 17"><rect x="0.5" y="0.5" width="15" height="11" fill="#e8f0fa" stroke="#3a4a8a" stroke-width="1.2"/><path d="M4 6.5L6.5 9L11 3.5" stroke="#2a4ac8" stroke-width="1.5" fill="none"/><path d="M9 7.5H13" stroke="#2a4ac8"/><path d="M5 14.5H11" stroke="#889" stroke-width="2"/></svg>
<svg class="a" style="left:396px;top:909px;" width="17" height="17" viewBox="0 0 17 17"><circle cx="5" cy="4" r="3" fill="#4a88d0"/><path d="M0 13C0.5 8 9.5 8 10 13Z" fill="#3a78c8"/><circle cx="11.5" cy="7" r="3" fill="#5ab848"/><path d="M6 16C6.5 11 16.5 11 17 16Z" fill="#48a838"/></svg>
<div class="a" style="left:493px;top:789px;width:4px;height:182px;background:#f6f2f5"></div>
<div class="a" style="left:493px;top:788px;width:1px;height:183px;background:#8c8c8c"></div>
<svg class="a" style="left:218px;top:957px;" width="5" height="8" viewBox="0 0 5 8"><path d="M5 0L0 4L5 8Z" fill="#333"/></svg>
<div class="a" style="left:230px;top:953px;width:121px;height:15px;border:1px solid #9a9a9a;border-radius:2px;background:linear-gradient(#f8f8f8,#e4e4e4 50%,#d0d0d0)"></div>
<svg class="a" style="left:286px;top:957px;" width="7" height="7" viewBox="0 0 7 7"><path d="M0.5 0V7M3.5 0V7M6.5 0V7" stroke="#555"/></svg>
<svg class="a" style="left:481px;top:957px;" width="5" height="8" viewBox="0 0 5 8"><path d="M0 0L5 4L0 8Z" fill="#333"/></svg>
<div class="a" style="left:7px;top:1003px;width:491px;height:21px;background:#c2c2c2"></div>
<svg class="a" style="left:0px;top:1003px" width="300" height="21" viewBox="0 0 300 21"><path d="M202.5 0.5L291.5 0.5L284.5 17.5L195.5 17.5Z" fill="#dcdcdc" stroke="#a0a0a0"/><path d="M140.5 0.5L202.5 0.5L195.5 17.5L133.5 17.5Z" fill="#dcdcdc" stroke="#a0a0a0"/><path d="M79.5 0.5L140.5 0.5L133.5 17.5L72.5 17.5Z" fill="#dcdcdc" stroke="#a0a0a0"/><path d="M3 0L79.5 0L72.5 17.5L11 17.5Z" fill="#f6f2f5"/><path d="M3 0.5L11 17.5L72.5 17.5L79.5 0.5" fill="none" stroke="#8a8a8a"/></svg>
<div class="t" style="left:17.5px;top:1006.00px;font-size:11.46px;color:#000;font-weight:bold;">Explorer</div>
<div class="t" style="left:84.4px;top:1006.64px;font-size:10.7px;color:#000;font-weight:normal;">Themes</div>
<div class="t" style="left:145px;top:1006.36px;font-size:11.03px;color:#000;font-weight:normal;">Buttons</div>
<div class="t" style="left:209px;top:1006.64px;font-size:10.7px;color:#000;font-weight:normal;">Backgrounds</div>
<div class="a" style="left:505px;top:758px;width:1166px;height:267px;border:1px solid #a6a6a6;border-bottom:none"></div>
<svg class="a" style="left:510px;top:763px;" width="7" height="7" viewBox="0 0 7 7"><path d="M0.5 0.5L6.5 6.5M6.5 0.5L0.5 6.5" stroke="#333" stroke-width="1.5"/></svg>
<svg class="a" style="left:511px;top:776px;" width="5" height="8" viewBox="0 0 5 8"><path d="M5 0L0 4L5 8Z" fill="#444"/></svg>
<div class="a" style="left:511px;top:794px;width:4px;height:4px;border-radius:50%;background:#555"></div>
<div class="a" style="left:511px;top:799px;width:4px;height:4px;border-radius:50%;background:#555"></div>
<div class="a" style="left:511px;top:804px;width:4px;height:4px;border-radius:50%;background:#555"></div>
<div class="a" style="left:511px;top:809px;width:4px;height:4px;border-radius:50%;background:#555"></div>
<div class="a" style="left:511px;top:814px;width:4px;height:4px;border-radius:50%;background:#555"></div>
<div class="a" style="left:511px;top:819px;width:4px;height:4px;border-radius:50%;background:#555"></div>
<svg class="a" style="left:528px;top:766px;" width="17" height="16" viewBox="0 0 17 16"><path d="M6 0.5H11V5.5H16.5V10.5H11V15.5H6V10.5H0.5V5.5H6Z" fill="#f2e8a8" stroke="#b8a45a"/></svg>
<svg class="a" style="left:547px;top:773px;" width="7" height="4" viewBox="0 0 7 4"><path d="M0 0H7L3.5 4Z" fill="#000"/></svg>
<div class="a" style="left:560px;top:765px;width:1px;height:18px;background:#9a9a9a"></div>
<svg class="a" style="left:570px;top:766px;" width="17" height="17" viewBox="0 0 17 17"><path d="M4 0.5V8M0.5 4H8" stroke="#b8b8b8" stroke-width="2.5"/><path d="M4 0.5V8M0.5 4H8" stroke="#eee" stroke-width="0.8"/><rect x="7.5" y="9.5" width="9" height="7" fill="#e8e8e8" stroke="#b8b8b8"/><path d="M10 14H14" stroke="#999" stroke-dasharray="1 1"/></svg>
<svg class="a" style="left:594px;top:766px;" width="17" height="17" viewBox="0 0 17 17"><path d="M4 0.5V8M0.5 4H8" stroke="#b8b8b8" stroke-width="2.5"/><rect x="1.5" y="7.5" width="15" height="9" fill="#d8d8d8" stroke="#b8b8b8"/><path d="M6 8V16M11 8V16" stroke="#999"/></svg>
<svg class="a" style="left:618px;top:766px;" width="17" height="17" viewBox="0 0 17 17"><path d="M4 0.5V8M0.5 4H8" stroke="#b8b8b8" stroke-width="2.5"/><rect x="3.5" y="6.5" width="13" height="10" fill="#e4e4e4" stroke="#b8b8b8"/></svg>
<svg class="a" style="left:646px;top:766px;" width="17" height="17" viewBox="0 0 17 17"><path d="M4 0.5V8M0.5 4H8" stroke="#b8b8b8" stroke-width="2.5"/><path d="M8 3H16L12 9V16Z" fill="#c8c8c8" stroke="#b8b8b8"/></svg>
<svg class="a" style="left:673px;top:773px;" width="7" height="4" viewBox="0 0 7 4"><path d="M0 0H7L3.5 4Z" fill="#999"/></svg>
<div class="a" style="left:685px;top:765px;width:1px;height:18px;background:#9a9a9a"></div>
<svg class="a" style="left:694px;top:766px;" width="17" height="17" viewBox="0 0 17 17"><path d="M1 9L4 3H14L16 9V15H1Z" fill="#d4d4d4" stroke="#b8b8b8"/><path d="M6 6H12" stroke="#eee" stroke-dasharray="1 1"/></svg>
<svg class="a" style="left:718px;top:766px;" width="17" height="17" viewBox="0 0 17 17"><rect x="1.5" y="4.5" width="12" height="12" rx="1" fill="#c8c8c8" stroke="#b8b8b8"/><rect x="7" y="0.5" width="9" height="7" fill="#e4e4e4" stroke="#b8b8b8"/><rect x="4" y="12" width="6" height="4" fill="#999"/></svg>
<div class="a" style="left:741px;top:765px;width:1px;height:18px;background:#9a9a9a"></div>
<svg class="a" style="left:750px;top:766px;" width="17" height="17" viewBox="0 0 17 17"><path d="M1 10H16V16H1Z" fill="#c8c8c8" stroke="#b8b8b8"/><path d="M8 10V2L12 4L8 6" fill="#d0d0d0" stroke="#b8b8b8"/></svg>
<svg class="a" style="left:775px;top:766px;" width="16" height="17" viewBox="0 0 16 17"><rect x="1.5" y="3.5" width="13" height="13" rx="1" fill="#d4d4d4" stroke="#b8b8b8"/><path d="M8 3L12 1V9" fill="#e4e4e4" stroke="#b8b8b8"/><rect x="5" y="12" width="6" height="4" fill="#888"/></svg>
<div class="a" style="left:797px;top:765px;width:1px;height:18px;background:#9a9a9a"></div>
<svg class="a" style="left:806px;top:766px;" width="17" height="17" viewBox="0 0 17 17"><rect x="1.5" y="6.5" width="5" height="10" fill="#e0e0e0" stroke="#b8b8b8"/><rect x="8.5" y="5.5" width="7" height="11" fill="#e0e0e0" stroke="#b8b8b8"/><path d="M16 3H8M10 1L8 3L10 5" stroke="#aaa"/></svg>
<div class="a" style="left:827px;top:764px;width:24px;height:20px;border:1px solid #6a6a6a;border-radius:3px;background:linear-gradient(#e6e6e6,#d2d2d2)"></div>
<div class="a" style="left:850px;top:764px;width:25px;height:20px;border:1px solid #6a6a6a;border-radius:3px;background:linear-gradient(#e6e6e6,#d2d2d2)"></div>
<svg class="a" style="left:831px;top:766px;" width="17" height="17" viewBox="0 0 17 17"><rect x="1.5" y="6.5" width="11" height="10" fill="#6ad08a" stroke="#2a6aa0"/><path d="M11 12H4M6 9.5L3.5 12L6 14.5" stroke="#111" stroke-width="1.5" fill="none"/><circle cx="12" cy="5" r="4.3" fill="#fff" stroke="#333"/><path d="M12 2.5V5H14" stroke="#333"/></svg>
<svg class="a" style="left:854px;top:767px;" width="17" height="14" viewBox="0 0 17 14"><path d="M1 6H7M4 3V9M1.8 3.8L6.2 8.2M6.2 3.8L1.8 8.2" stroke="#3a7a9a" stroke-width="1"/><path d="M7 3L15 7L11.5 8L14.5 11.5L13 12.5L10 9L8.5 11.5Z" fill="#eef" stroke="#333" stroke-width="0.9"/></svg>
<div class="a" style="left:877px;top:765px;width:1px;height:18px;background:#9a9a9a"></div>
<svg class="a" style="left:886px;top:768px;" width="17" height="14" viewBox="0 0 17 14"><path d="M0.5 0.5L6 0.5L0.5 6Z" fill="#aaa"/><rect x="1.5" y="3.5" width="14" height="10" fill="#e0e0e0" stroke="#b8b8b8"/></svg>
<svg class="a" style="left:911px;top:768px;" width="17" height="14" viewBox="0 0 17 14"><path d="M16.5 0.5L11 0.5L16.5 6Z" fill="#aaa"/><rect x="1.5" y="3.5" width="14" height="10" fill="#e0e0e0" stroke="#b8b8b8"/></svg>
<svg class="a" style="left:935px;top:767px;" width="17" height="16" viewBox="0 0 17 16"><circle cx="7.5" cy="8" r="5.5" fill="none" stroke="#b8b8b8" stroke-width="2.2"/><circle cx="7.5" cy="8" r="2" fill="#aaa"/><path d="M13 8L16 8L14.5 11Z" fill="#bbb"/></svg>
<div class="a" style="left:525px;top:787px;width:1139px;height:1px;background:#b8b8b8"></div>
<div class="a" style="left:525px;top:787px;width:200px;height:169px;border-left:1px solid #a0a0a0;border-top:1px solid #c0c0c0"></div>
<div class="t" style="left:607px;top:794.00px;font-size:20.44px;color:#000;font-weight:normal;">00:00:00:00</div>
<div class="a" style="left:526px;top:819px;width:191px;height:1px;background:#a8a8a8"></div>
<div class="a" style="left:716px;top:819px;width:1px;height:97px;background:#a8a8a8"></div>
<div class="a" style="left:526px;top:875px;width:191px;height:1px;background:#a8a8a8"></div>
<div class="a" style="left:526px;top:915px;width:191px;height:1px;background:#a8a8a8"></div>
<div class="a" style="left:529px;top:824px;width:34px;height:27px;border:1px solid #5a7aaa;border-radius:3px;background:linear-gradient(#8aa8d8,#5a80c0)"></div>
<svg class="a" style="left:531px;top:826px;" width="26" height="23" viewBox="0 0 26 23"><g transform="rotate(-40 12 11.5)"><rect x="3" y="6" width="18" height="11" fill="none" stroke="#e8f0ff" stroke-width="2"/><path d="M9 6V17M15 6V17" stroke="#e8f0ff" stroke-width="1.5"/></g></svg>
<div class="t" style="left:556px;top:827.69px;font-size:11px;color:#e8f0ff;font-weight:normal;">1</div>
<div class="a" style="left:568px;top:823px;width:85px;height:1px;background:linear-gradient(90deg,#e0dde0,transparent)"></div>
<div class="t" style="left:570px;top:826.34px;font-size:10.23px;color:#000;font-weight:normal;">Video</div>
<div class="a" style="left:694px;top:823px;width:21px;height:19px;border:1px solid #7a7a7a;border-radius:3px;background:linear-gradient(#f2f2f2,#d6d6d6)"></div>
<svg class="a" style="left:698px;top:827px;" width="13" height="11" viewBox="0 0 13 11"><rect x="0.5" y="0.5" width="12" height="10" fill="#8ad89a" stroke="#222"/><path d="M0.5 2.5H12.5M0.5 8.5H12.5" stroke="#222" stroke-width="1.4" stroke-dasharray="1.5 1"/></svg>
<div class="a" style="left:568px;top:859px;width:148px;height:16px;background:#dcdcdc;border-top:1px solid #c8c8c8;border-left:1px solid #c8c8c8"></div>
<div class="t" style="left:575px;top:862.43px;font-size:10.71px;color:#000;font-weight:normal;">Transformations</div>
<div class="a" style="left:529px;top:880px;width:34px;height:27px;border:1px solid #8a4050;border-radius:3px;background:linear-gradient(#c07080,#a05060)"></div>
<svg class="a" style="left:533px;top:884px;" width="14" height="18" viewBox="0 0 14 18"><path d="M1 5H5L11 1V17L5 13H1Z" fill="#e8c8c8" stroke="#f4dede" stroke-width="0.5"/></svg>
<div class="t" style="left:556px;top:883.69px;font-size:11px;color:#f4e0e0;font-weight:normal;">1</div>
<div class="a" style="left:568px;top:879px;width:85px;height:1px;background:linear-gradient(90deg,#e0dde0,transparent)"></div>
<div class="t" style="left:570px;top:882.26px;font-size:10.32px;color:#000;font-weight:normal;">Audio</div>
<div class="a" style="left:694px;top:879px;width:21px;height:19px;border:1px solid #7a7a7a;border-radius:3px;background:linear-gradient(#f2f2f2,#d6d6d6)"></div>
<svg class="a" style="left:699px;top:882px;" width="11" height="13" viewBox="0 0 11 13"><path d="M1 4.5H4L9 1V12L4 8.5H1Z" fill="#555" stroke="#333" stroke-width="0.6"/></svg>
<div class="a" style="left:725px;top:787px;width:939px;height:16px;background:#f6f2f5"></div>
<div class="a" style="left:725px;top:802px;width:911px;height:1px;background:#c8c8c8"></div>
<div class="t" style="left:727px;top:806.83px;font-size:9.3px;color:#000;font-weight:normal;">00:00:00:00</div>
<div class="a" style="left:725px;top:813px;width:1px;height:7px;background:#555"></div>
<div class="a" style="left:771px;top:816px;width:1px;height:4px;background:#777"></div>
<div class="t" style="left:818px;top:806.83px;font-size:9.3px;color:#000;font-weight:normal;">00:00:00:01</div>
<div class="a" style="left:816px;top:813px;width:1px;height:7px;background:#555"></div>
<div class="a" style="left:862px;top:816px;width:1px;height:4px;background:#777"></div>
<div class="t" style="left:909px;top:806.83px;font-size:9.3px;color:#000;font-weight:normal;">00:00:00:02</div>
<div class="a" style="left:907px;top:813px;width:1px;height:7px;background:#555"></div>
<div class="a" style="left:953px;top:816px;width:1px;height:4px;background:#777"></div>
<div class="t" style="left:1000px;top:806.83px;font-size:9.3px;color:#000;font-weight:normal;">00:00:00:03</div>
<div class="a" style="left:998px;top:813px;width:1px;height:7px;background:#555"></div>
<div class="a" style="left:1044px;top:816px;width:1px;height:4px;background:#777"></div>
<div class="t" style="left:1091px;top:806.83px;font-size:9.3px;color:#000;font-weight:normal;">00:00:00:04</div>
<div class="a" style="left:1089px;top:813px;width:1px;height:7px;background:#555"></div>
<div class="a" style="left:1135px;top:816px;width:1px;height:4px;background:#777"></div>
<div class="t" style="left:1182px;top:806.83px;font-size:9.3px;color:#000;font-weight:normal;">00:00:00:05</div>
<div class="a" style="left:1180px;top:813px;width:1px;height:7px;background:#555"></div>
<div class="a" style="left:1226px;top:816px;width:1px;height:4px;background:#777"></div>
<div class="t" style="left:1273px;top:806.83px;font-size:9.3px;color:#000;font-weight:normal;">00:00:00:06</div>
<div class="a" style="left:1271px;top:813px;width:1px;height:7px;background:#555"></div>
<div class="a" style="left:1317px;top:816px;width:1px;height:4px;background:#777"></div>
<div class="t" style="left:1364px;top:806.83px;font-size:9.3px;color:#000;font-weight:normal;">00:00:00:07</div>
<div class="a" style="left:1362px;top:813px;width:1px;height:7px;background:#555"></div>
<div class="a" style="left:1408px;top:816px;width:1px;height:4px;background:#777"></div>
<div class="t" style="left:1455px;top:806.83px;font-size:9.3px;color:#000;font-weight:normal;">00:00:00:08</div>
<div class="a" style="left:1453px;top:813px;width:1px;height:7px;background:#555"></div>
<div class="a" style="left:1499px;top:816px;width:1px;height:4px;background:#777"></div>
<div class="t" style="left:1546px;top:806.83px;font-size:9.3px;color:#000;font-weight:normal;">00:00:00:09</div>
<div class="a" style="left:1544px;top:813px;width:1px;height:7px;background:#555"></div>
<div class="a" style="left:1590px;top:816px;width:1px;height:4px;background:#777"></div>
<div class="t" style="left:1637px;top:806.24px;font-size:10px;color:#000;font-weight:normal;">00:0(</div>
<div class="a" style="left:1635px;top:813px;width:1px;height:7px;background:#555"></div>
<div class="a" style="left:1681px;top:816px;width:1px;height:4px;background:#777"></div>
<div class="a" style="left:1636px;top:787px;width:23px;height:169px;background:#a2a2a2"></div>
<div class="a" style="left:1636px;top:787px;width:23px;height:15px;background:#aaaaaa"></div>
<div class="t" style="left:1637px;top:806.24px;font-size:10px;color:#333;font-weight:normal;">00:0(</div>
<div class="a" style="left:725px;top:820px;width:911px;height:1px;background:#999"></div>
<div class="a" style="left:725px;top:821px;width:911px;height:37px;background:#f8f8fb"></div>
<div class="a" style="left:725px;top:821px;width:911px;height:1px;background:#111"></div>
<div class="a" style="left:725px;top:855px;width:911px;height:2px;background:#111"></div>
<div class="a" style="left:725px;top:821px;width:1px;height:135px;background:#111"></div>
<svg class="a" style="left:728px;top:824px;" width="56" height="31" viewBox="0 0 56 31"><defs>
<linearGradient id="c0b" x1="0" y1="0" x2="1" y2="0.2"><stop offset="0" stop-color="#0a24a8"/><stop offset="0.55" stop-color="#0a26ac"/><stop offset="1" stop-color="#0e2eba"/></linearGradient>
<filter id="c0f1" filterUnits="userSpaceOnUse" x="-200" y="-200" width="1424" height="1170"><feGaussianBlur stdDeviation="45"/></filter>
<filter id="c0f2" filterUnits="userSpaceOnUse" x="-200" y="-200" width="1424" height="1170"><feGaussianBlur stdDeviation="14"/></filter>
<filter id="c0f3" filterUnits="userSpaceOnUse" x="-200" y="-200" width="1424" height="1170"><feGaussianBlur stdDeviation="4"/></filter>
</defs>
<g transform="scale(0.05469,0.04026)">
<rect width="1024" height="770" fill="url(#c0b)"/>
<ellipse cx="860" cy="40" rx="420" ry="80" fill="#3050e0" opacity="0.7" filter="url(#c0f1)"/>
<ellipse cx="780" cy="560" rx="380" ry="230" fill="#2848d8" opacity="0.6" filter="url(#c0f1)"/>
<ellipse cx="180" cy="720" rx="320" ry="100" fill="#061c9a" opacity="0.4" filter="url(#c0f1)"/>
<path d="M-20 470C250 520 500 600 800 770" stroke="#1a3ac4" stroke-width="60" fill="none" opacity="0.35" filter="url(#c0f1)"/>
<ellipse cx="900" cy="265" rx="240" ry="55" fill="#051a9a" opacity="0.7" filter="url(#c0f2)"/>
<ellipse cx="260" cy="144" rx="300" ry="22" fill="#1a38c2" opacity="0.5" filter="url(#c0f2)"/>
<path d="M250 50C600 52 850 42 1040 28" stroke="#4464ee" stroke-width="34" fill="none" opacity="0.6" filter="url(#c0f2)"/>
<path d="M520 120C760 118 900 115 1040 100" stroke="#4262ee" stroke-width="26" fill="none" opacity="0.6" filter="url(#c0f2)"/>
<path d="M-20 285C250 295 480 312 700 285C850 265 950 215 1040 178" stroke="#3454e8" stroke-width="30" fill="none" opacity="0.7" filter="url(#c0f2)"/>
<path d="M600 298C800 280 920 230 1040 178" stroke="#6a88fa" stroke-width="10" fill="none" opacity="0.7" filter="url(#c0f3)"/>
<path d="M700 140C850 135 950 125 1040 112" stroke="#6a88fa" stroke-width="7" fill="none" opacity="0.5" filter="url(#c0f3)"/>
</g></svg>
<svg class="a" style="left:789px;top:824px;" width="56" height="31" viewBox="0 0 56 31"><defs>
<linearGradient id="c1b" x1="0" y1="0" x2="1" y2="0.2"><stop offset="0" stop-color="#0a24a8"/><stop offset="0.55" stop-color="#0a26ac"/><stop offset="1" stop-color="#0e2eba"/></linearGradient>
<filter id="c1f1" filterUnits="userSpaceOnUse" x="-200" y="-200" width="1424" height="1170"><feGaussianBlur stdDeviation="45"/></filter>
<filter id="c1f2" filterUnits="userSpaceOnUse" x="-200" y="-200" width="1424" height="1170"><feGaussianBlur stdDeviation="14"/></filter>
<filter id="c1f3" filterUnits="userSpaceOnUse" x="-200" y="-200" width="1424" height="1170"><feGaussianBlur stdDeviation="4"/></filter>
</defs>
<g transform="scale(0.05469,0.04026)">
<rect width="1024" height="770" fill="url(#c1b)"/>
<ellipse cx="860" cy="40" rx="420" ry="80" fill="#3050e0" opacity="0.7" filter="url(#c1f1)"/>
<ellipse cx="780" cy="560" rx="380" ry="230" fill="#2848d8" opacity="0.6" filter="url(#c1f1)"/>
<ellipse cx="180" cy="720" rx="320" ry="100" fill="#061c9a" opacity="0.4" filter="url(#c1f1)"/>
<path d="M-20 470C250 520 500 600 800 770" stroke="#1a3ac4" stroke-width="60" fill="none" opacity="0.35" filter="url(#c1f1)"/>
<ellipse cx="900" cy="265" rx="240" ry="55" fill="#051a9a" opacity="0.7" filter="url(#c1f2)"/>
<ellipse cx="260" cy="144" rx="300" ry="22" fill="#1a38c2" opacity="0.5" filter="url(#c1f2)"/>
<path d="M250 50C600 52 850 42 1040 28" stroke="#4464ee" stroke-width="34" fill="none" opacity="0.6" filter="url(#c1f2)"/>
<path d="M520 120C760 118 900 115 1040 100" stroke="#4262ee" stroke-width="26" fill="none" opacity="0.6" filter="url(#c1f2)"/>
<path d="M-20 285C250 295 480 312 700 285C850 265 950 215 1040 178" stroke="#3454e8" stroke-width="30" fill="none" opacity="0.7" filter="url(#c1f2)"/>
<path d="M600 298C800 280 920 230 1040 178" stroke="#6a88fa" stroke-width="10" fill="none" opacity="0.7" filter="url(#c1f3)"/>
<path d="M700 140C850 135 950 125 1040 112" stroke="#6a88fa" stroke-width="7" fill="none" opacity="0.5" filter="url(#c1f3)"/>
</g></svg>
<svg class="a" style="left:849px;top:824px;" width="56" height="31" viewBox="0 0 56 31"><defs>
<linearGradient id="c2b" x1="0" y1="0" x2="1" y2="0.2"><stop offset="0" stop-color="#0a24a8"/><stop offset="0.55" stop-color="#0a26ac"/><stop offset="1" stop-color="#0e2eba"/></linearGradient>
<filter id="c2f1" filterUnits="userSpaceOnUse" x="-200" y="-200" width="1424" height="1170"><feGaussianBlur stdDeviation="45"/></filter>
<filter id="c2f2" filterUnits="userSpaceOnUse" x="-200" y="-200" width="1424" height="1170"><feGaussianBlur stdDeviation="14"/></filter>
<filter id="c2f3" filterUnits="userSpaceOnUse" x="-200" y="-200" width="1424" height="1170"><feGaussianBlur stdDeviation="4"/></filter>
</defs>
<g transform="scale(0.05469,0.04026)">
<rect width="1024" height="770" fill="url(#c2b)"/>
<ellipse cx="860" cy="40" rx="420" ry="80" fill="#3050e0" opacity="0.7" filter="url(#c2f1)"/>
<ellipse cx="780" cy="560" rx="380" ry="230" fill="#2848d8" opacity="0.6" filter="url(#c2f1)"/>
<ellipse cx="180" cy="720" rx="320" ry="100" fill="#061c9a" opacity="0.4" filter="url(#c2f1)"/>
<path d="M-20 470C250 520 500 600 800 770" stroke="#1a3ac4" stroke-width="60" fill="none" opacity="0.35" filter="url(#c2f1)"/>
<ellipse cx="900" cy="265" rx="240" ry="55" fill="#051a9a" opacity="0.7" filter="url(#c2f2)"/>
<ellipse cx="260" cy="144" rx="300" ry="22" fill="#1a38c2" opacity="0.5" filter="url(#c2f2)"/>
<path d="M250 50C600 52 850 42 1040 28" stroke="#4464ee" stroke-width="34" fill="none" opacity="0.6" filter="url(#c2f2)"/>
<path d="M520 120C760 118 900 115 1040 100" stroke="#4262ee" stroke-width="26" fill="none" opacity="0.6" filter="url(#c2f2)"/>
<path d="M-20 285C250 295 480 312 700 285C850 265 950 215 1040 178" stroke="#3454e8" stroke-width="30" fill="none" opacity="0.7" filter="url(#c2f2)"/>
<path d="M600 298C800 280 920 230 1040 178" stroke="#6a88fa" stroke-width="10" fill="none" opacity="0.7" filter="url(#c2f3)"/>
<path d="M700 140C850 135 950 125 1040 112" stroke="#6a88fa" stroke-width="7" fill="none" opacity="0.5" filter="url(#c2f3)"/>
</g></svg>
<svg class="a" style="left:910px;top:824px;" width="56" height="31" viewBox="0 0 56 31"><defs>
<linearGradient id="c3b" x1="0" y1="0" x2="1" y2="0.2"><stop offset="0" stop-color="#0a24a8"/><stop offset="0.55" stop-color="#0a26ac"/><stop offset="1" stop-color="#0e2eba"/></linearGradient>
<filter id="c3f1" filterUnits="userSpaceOnUse" x="-200" y="-200" width="1424" height="1170"><feGaussianBlur stdDeviation="45"/></filter>
<filter id="c3f2" filterUnits="userSpaceOnUse" x="-200" y="-200" width="1424" height="1170"><feGaussianBlur stdDeviation="14"/></filter>
<filter id="c3f3" filterUnits="userSpaceOnUse" x="-200" y="-200" width="1424" height="1170"><feGaussianBlur stdDeviation="4"/></filter>
</defs>
<g transform="scale(0.05469,0.04026)">
<rect width="1024" height="770" fill="url(#c3b)"/>
<ellipse cx="860" cy="40" rx="420" ry="80" fill="#3050e0" opacity="0.7" filter="url(#c3f1)"/>
<ellipse cx="780" cy="560" rx="380" ry="230" fill="#2848d8" opacity="0.6" filter="url(#c3f1)"/>
<ellipse cx="180" cy="720" rx="320" ry="100" fill="#061c9a" opacity="0.4" filter="url(#c3f1)"/>
<path d="M-20 470C250 520 500 600 800 770" stroke="#1a3ac4" stroke-width="60" fill="none" opacity="0.35" filter="url(#c3f1)"/>
<ellipse cx="900" cy="265" rx="240" ry="55" fill="#051a9a" opacity="0.7" filter="url(#c3f2)"/>
<ellipse cx="260" cy="144" rx="300" ry="22" fill="#1a38c2" opacity="0.5" filter="url(#c3f2)"/>
<path d="M250 50C600 52 850 42 1040 28" stroke="#4464ee" stroke-width="34" fill="none" opacity="0.6" filter="url(#c3f2)"/>
<path d="M520 120C760 118 900 115 1040 100" stroke="#4262ee" stroke-width="26" fill="none" opacity="0.6" filter="url(#c3f2)"/>
<path d="M-20 285C250 295 480 312 700 285C850 265 950 215 1040 178" stroke="#3454e8" stroke-width="30" fill="none" opacity="0.7" filter="url(#c3f2)"/>
<path d="M600 298C800 280 920 230 1040 178" stroke="#6a88fa" stroke-width="10" fill="none" opacity="0.7" filter="url(#c3f3)"/>
<path d="M700 140C850 135 950 125 1040 112" stroke="#6a88fa" stroke-width="7" fill="none" opacity="0.5" filter="url(#c3f3)"/>
</g></svg>
<svg class="a" style="left:971px;top:824px;" width="56" height="31" viewBox="0 0 56 31"><defs>
<linearGradient id="c4b" x1="0" y1="0" x2="1" y2="0.2"><stop offset="0" stop-color="#0a24a8"/><stop offset="0.55" stop-color="#0a26ac"/><stop offset="1" stop-color="#0e2eba"/></linearGradient>
<filter id="c4f1" filterUnits="userSpaceOnUse" x="-200" y="-200" width="1424" height="1170"><feGaussianBlur stdDeviation="45"/></filter>
<filter id="c4f2" filterUnits="userSpaceOnUse" x="-200" y="-200" width="1424" height="1170"><feGaussianBlur stdDeviation="14"/></filter>
<filter id="c4f3" filterUnits="userSpaceOnUse" x="-200" y="-200" width="1424" height="1170"><feGaussianBlur stdDeviation="4"/></filter>
</defs>
<g transform="scale(0.05469,0.04026)">
<rect width="1024" height="770" fill="url(#c4b)"/>
<ellipse cx="860" cy="40" rx="420" ry="80" fill="#3050e0" opacity="0.7" filter="url(#c4f1)"/>
<ellipse cx="780" cy="560" rx="380" ry="230" fill="#2848d8" opacity="0.6" filter="url(#c4f1)"/>
<ellipse cx="180" cy="720" rx="320" ry="100" fill="#061c9a" opacity="0.4" filter="url(#c4f1)"/>
<path d="M-20 470C250 520 500 600 800 770" stroke="#1a3ac4" stroke-width="60" fill="none" opacity="0.35" filter="url(#c4f1)"/>
<ellipse cx="900" cy="265" rx="240" ry="55" fill="#051a9a" opacity="0.7" filter="url(#c4f2)"/>
<ellipse cx="260" cy="144" rx="300" ry="22" fill="#1a38c2" opacity="0.5" filter="url(#c4f2)"/>
<path d="M250 50C600 52 850 42 1040 28" stroke="#4464ee" stroke-width="34" fill="none" opacity="0.6" filter="url(#c4f2)"/>
<path d="M520 120C760 118 900 115 1040 100" stroke="#4262ee" stroke-width="26" fill="none" opacity="0.6" filter="url(#c4f2)"/>
<path d="M-20 285C250 295 480 312 700 285C850 265 950 215 1040 178" stroke="#3454e8" stroke-width="30" fill="none" opacity="0.7" filter="url(#c4f2)"/>
<path d="M600 298C800 280 920 230 1040 178" stroke="#6a88fa" stroke-width="10" fill="none" opacity="0.7" filter="url(#c4f3)"/>
<path d="M700 140C850 135 950 125 1040 112" stroke="#6a88fa" stroke-width="7" fill="none" opacity="0.5" filter="url(#c4f3)"/>
</g></svg>
<svg class="a" style="left:1032px;top:824px;" width="56" height="31" viewBox="0 0 56 31"><defs>
<linearGradient id="c5b" x1="0" y1="0" x2="1" y2="0.2"><stop offset="0" stop-color="#0a24a8"/><stop offset="0.55" stop-color="#0a26ac"/><stop offset="1" stop-color="#0e2eba"/></linearGradient>
<filter id="c5f1" filterUnits="userSpaceOnUse" x="-200" y="-200" width="1424" height="1170"><feGaussianBlur stdDeviation="45"/></filter>
<filter id="c5f2" filterUnits="userSpaceOnUse" x="-200" y="-200" width="1424" height="1170"><feGaussianBlur stdDeviation="14"/></filter>
<filter id="c5f3" filterUnits="userSpaceOnUse" x="-200" y="-200" width="1424" height="1170"><feGaussianBlur stdDeviation="4"/></filter>
</defs>
<g transform="scale(0.05469,0.04026)">
<rect width="1024" height="770" fill="url(#c5b)"/>
<ellipse cx="860" cy="40" rx="420" ry="80" fill="#3050e0" opacity="0.7" filter="url(#c5f1)"/>
<ellipse cx="780" cy="560" rx="380" ry="230" fill="#2848d8" opacity="0.6" filter="url(#c5f1)"/>
<ellipse cx="180" cy="720" rx="320" ry="100" fill="#061c9a" opacity="0.4" filter="url(#c5f1)"/>
<path d="M-20 470C250 520 500 600 800 770" stroke="#1a3ac4" stroke-width="60" fill="none" opacity="0.35" filter="url(#c5f1)"/>
<ellipse cx="900" cy="265" rx="240" ry="55" fill="#051a9a" opacity="0.7" filter="url(#c5f2)"/>
<ellipse cx="260" cy="144" rx="300" ry="22" fill="#1a38c2" opacity="0.5" filter="url(#c5f2)"/>
<path d="M250 50C600 52 850 42 1040 28" stroke="#4464ee" stroke-width="34" fill="none" opacity="0.6" filter="url(#c5f2)"/>
<path d="M520 120C760 118 900 115 1040 100" stroke="#4262ee" stroke-width="26" fill="none" opacity="0.6" filter="url(#c5f2)"/>
<path d="M-20 285C250 295 480 312 700 285C850 265 950 215 1040 178" stroke="#3454e8" stroke-width="30" fill="none" opacity="0.7" filter="url(#c5f2)"/>
<path d="M600 298C800 280 920 230 1040 178" stroke="#6a88fa" stroke-width="10" fill="none" opacity="0.7" filter="url(#c5f3)"/>
<path d="M700 140C850 135 950 125 1040 112" stroke="#6a88fa" stroke-width="7" fill="none" opacity="0.5" filter="url(#c5f3)"/>
</g></svg>
<svg class="a" style="left:1092px;top:824px;" width="56" height="31" viewBox="0 0 56 31"><defs>
<linearGradient id="c6b" x1="0" y1="0" x2="1" y2="0.2"><stop offset="0" stop-color="#0a24a8"/><stop offset="0.55" stop-color="#0a26ac"/><stop offset="1" stop-color="#0e2eba"/></linearGradient>
<filter id="c6f1" filterUnits="userSpaceOnUse" x="-200" y="-200" width="1424" height="1170"><feGaussianBlur stdDeviation="45"/></filter>
<filter id="c6f2" filterUnits="userSpaceOnUse" x="-200" y="-200" width="1424" height="1170"><feGaussianBlur stdDeviation="14"/></filter>
<filter id="c6f3" filterUnits="userSpaceOnUse" x="-200" y="-200" width="1424" height="1170"><feGaussianBlur stdDeviation="4"/></filter>
</defs>
<g transform="scale(0.05469,0.04026)">
<rect width="1024" height="770" fill="url(#c6b)"/>
<ellipse cx="860" cy="40" rx="420" ry="80" fill="#3050e0" opacity="0.7" filter="url(#c6f1)"/>
<ellipse cx="780" cy="560" rx="380" ry="230" fill="#2848d8" opacity="0.6" filter="url(#c6f1)"/>
<ellipse cx="180" cy="720" rx="320" ry="100" fill="#061c9a" opacity="0.4" filter="url(#c6f1)"/>
<path d="M-20 470C250 520 500 600 800 770" stroke="#1a3ac4" stroke-width="60" fill="none" opacity="0.35" filter="url(#c6f1)"/>
<ellipse cx="900" cy="265" rx="240" ry="55" fill="#051a9a" opacity="0.7" filter="url(#c6f2)"/>
<ellipse cx="260" cy="144" rx="300" ry="22" fill="#1a38c2" opacity="0.5" filter="url(#c6f2)"/>
<path d="M250 50C600 52 850 42 1040 28" stroke="#4464ee" stroke-width="34" fill="none" opacity="0.6" filter="url(#c6f2)"/>
<path d="M520 120C760 118 900 115 1040 100" stroke="#4262ee" stroke-width="26" fill="none" opacity="0.6" filter="url(#c6f2)"/>
<path d="M-20 285C250 295 480 312 700 285C850 265 950 215 1040 178" stroke="#3454e8" stroke-width="30" fill="none" opacity="0.7" filter="url(#c6f2)"/>
<path d="M600 298C800 280 920 230 1040 178" stroke="#6a88fa" stroke-width="10" fill="none" opacity="0.7" filter="url(#c6f3)"/>
<path d="M700 140C850 135 950 125 1040 112" stroke="#6a88fa" stroke-width="7" fill="none" opacity="0.5" filter="url(#c6f3)"/>
</g></svg>
<svg class="a" style="left:1153px;top:824px;" width="56" height="31" viewBox="0 0 56 31"><defs>
<linearGradient id="c7b" x1="0" y1="0" x2="1" y2="0.2"><stop offset="0" stop-color="#0a24a8"/><stop offset="0.55" stop-color="#0a26ac"/><stop offset="1" stop-color="#0e2eba"/></linearGradient>
<filter id="c7f1" filterUnits="userSpaceOnUse" x="-200" y="-200" width="1424" height="1170"><feGaussianBlur stdDeviation="45"/></filter>
<filter id="c7f2" filterUnits="userSpaceOnUse" x="-200" y="-200" width="1424" height="1170"><feGaussianBlur stdDeviation="14"/></filter>
<filter id="c7f3" filterUnits="userSpaceOnUse" x="-200" y="-200" width="1424" height="1170"><feGaussianBlur stdDeviation="4"/></filter>
</defs>
<g transform="scale(0.05469,0.04026)">
<rect width="1024" height="770" fill="url(#c7b)"/>
<ellipse cx="860" cy="40" rx="420" ry="80" fill="#3050e0" opacity="0.7" filter="url(#c7f1)"/>
<ellipse cx="780" cy="560" rx="380" ry="230" fill="#2848d8" opacity="0.6" filter="url(#c7f1)"/>
<ellipse cx="180" cy="720" rx="320" ry="100" fill="#061c9a" opacity="0.4" filter="url(#c7f1)"/>
<path d="M-20 470C250 520 500 600 800 770" stroke="#1a3ac4" stroke-width="60" fill="none" opacity="0.35" filter="url(#c7f1)"/>
<ellipse cx="900" cy="265" rx="240" ry="55" fill="#051a9a" opacity="0.7" filter="url(#c7f2)"/>
<ellipse cx="260" cy="144" rx="300" ry="22" fill="#1a38c2" opacity="0.5" filter="url(#c7f2)"/>
<path d="M250 50C600 52 850 42 1040 28" stroke="#4464ee" stroke-width="34" fill="none" opacity="0.6" filter="url(#c7f2)"/>
<path d="M520 120C760 118 900 115 1040 100" stroke="#4262ee" stroke-width="26" fill="none" opacity="0.6" filter="url(#c7f2)"/>
<path d="M-20 285C250 295 480 312 700 285C850 265 950 215 1040 178" stroke="#3454e8" stroke-width="30" fill="none" opacity="0.7" filter="url(#c7f2)"/>
<path d="M600 298C800 280 920 230 1040 178" stroke="#6a88fa" stroke-width="10" fill="none" opacity="0.7" filter="url(#c7f3)"/>
<path d="M700 140C850 135 950 125 1040 112" stroke="#6a88fa" stroke-width="7" fill="none" opacity="0.5" filter="url(#c7f3)"/>
</g></svg>
<svg class="a" style="left:1214px;top:824px;" width="56" height="31" viewBox="0 0 56 31"><defs>
<linearGradient id="c8b" x1="0" y1="0" x2="1" y2="0.2"><stop offset="0" stop-color="#0a24a8"/><stop offset="0.55" stop-color="#0a26ac"/><stop offset="1" stop-color="#0e2eba"/></linearGradient>
<filter id="c8f1" filterUnits="userSpaceOnUse" x="-200" y="-200" width="1424" height="1170"><feGaussianBlur stdDeviation="45"/></filter>
<filter id="c8f2" filterUnits="userSpaceOnUse" x="-200" y="-200" width="1424" height="1170"><feGaussianBlur stdDeviation="14"/></filter>
<filter id="c8f3" filterUnits="userSpaceOnUse" x="-200" y="-200" width="1424" height="1170"><feGaussianBlur stdDeviation="4"/></filter>
</defs>
<g transform="scale(0.05469,0.04026)">
<rect width="1024" height="770" fill="url(#c8b)"/>
<ellipse cx="860" cy="40" rx="420" ry="80" fill="#3050e0" opacity="0.7" filter="url(#c8f1)"/>
<ellipse cx="780" cy="560" rx="380" ry="230" fill="#2848d8" opacity="0.6" filter="url(#c8f1)"/>
<ellipse cx="180" cy="720" rx="320" ry="100" fill="#061c9a" opacity="0.4" filter="url(#c8f1)"/>
<path d="M-20 470C250 520 500 600 800 770" stroke="#1a3ac4" stroke-width="60" fill="none" opacity="0.35" filter="url(#c8f1)"/>
<ellipse cx="900" cy="265" rx="240" ry="55" fill="#051a9a" opacity="0.7" filter="url(#c8f2)"/>
<ellipse cx="260" cy="144" rx="300" ry="22" fill="#1a38c2" opacity="0.5" filter="url(#c8f2)"/>
<path d="M250 50C600 52 850 42 1040 28" stroke="#4464ee" stroke-width="34" fill="none" opacity="0.6" filter="url(#c8f2)"/>
<path d="M520 120C760 118 900 115 1040 100" stroke="#4262ee" stroke-width="26" fill="none" opacity="0.6" filter="url(#c8f2)"/>
<path d="M-20 285C250 295 480 312 700 285C850 265 950 215 1040 178" stroke="#3454e8" stroke-width="30" fill="none" opacity="0.7" filter="url(#c8f2)"/>
<path d="M600 298C800 280 920 230 1040 178" stroke="#6a88fa" stroke-width="10" fill="none" opacity="0.7" filter="url(#c8f3)"/>
<path d="M700 140C850 135 950 125 1040 112" stroke="#6a88fa" stroke-width="7" fill="none" opacity="0.5" filter="url(#c8f3)"/>
</g></svg>
<svg class="a" style="left:1274px;top:824px;" width="56" height="31" viewBox="0 0 56 31"><defs>
<linearGradient id="c9b" x1="0" y1="0" x2="1" y2="0.2"><stop offset="0" stop-color="#0a24a8"/><stop offset="0.55" stop-color="#0a26ac"/><stop offset="1" stop-color="#0e2eba"/></linearGradient>
<filter id="c9f1" filterUnits="userSpaceOnUse" x="-200" y="-200" width="1424" height="1170"><feGaussianBlur stdDeviation="45"/></filter>
<filter id="c9f2" filterUnits="userSpaceOnUse" x="-200" y="-200" width="1424" height="1170"><feGaussianBlur stdDeviation="14"/></filter>
<filter id="c9f3" filterUnits="userSpaceOnUse" x="-200" y="-200" width="1424" height="1170"><feGaussianBlur stdDeviation="4"/></filter>
</defs>
<g transform="scale(0.05469,0.04026)">
<rect width="1024" height="770" fill="url(#c9b)"/>
<ellipse cx="860" cy="40" rx="420" ry="80" fill="#3050e0" opacity="0.7" filter="url(#c9f1)"/>
<ellipse cx="780" cy="560" rx="380" ry="230" fill="#2848d8" opacity="0.6" filter="url(#c9f1)"/>
<ellipse cx="180" cy="720" rx="320" ry="100" fill="#061c9a" opacity="0.4" filter="url(#c9f1)"/>
<path d="M-20 470C250 520 500 600 800 770" stroke="#1a3ac4" stroke-width="60" fill="none" opacity="0.35" filter="url(#c9f1)"/>
<ellipse cx="900" cy="265" rx="240" ry="55" fill="#051a9a" opacity="0.7" filter="url(#c9f2)"/>
<ellipse cx="260" cy="144" rx="300" ry="22" fill="#1a38c2" opacity="0.5" filter="url(#c9f2)"/>
<path d="M250 50C600 52 850 42 1040 28" stroke="#4464ee" stroke-width="34" fill="none" opacity="0.6" filter="url(#c9f2)"/>
<path d="M520 120C760 118 900 115 1040 100" stroke="#4262ee" stroke-width="26" fill="none" opacity="0.6" filter="url(#c9f2)"/>
<path d="M-20 285C250 295 480 312 700 285C850 265 950 215 1040 178" stroke="#3454e8" stroke-width="30" fill="none" opacity="0.7" filter="url(#c9f2)"/>
<path d="M600 298C800 280 920 230 1040 178" stroke="#6a88fa" stroke-width="10" fill="none" opacity="0.7" filter="url(#c9f3)"/>
<path d="M700 140C850 135 950 125 1040 112" stroke="#6a88fa" stroke-width="7" fill="none" opacity="0.5" filter="url(#c9f3)"/>
</g></svg>
<svg class="a" style="left:1335px;top:824px;" width="56" height="31" viewBox="0 0 56 31"><defs>
<linearGradient id="c10b" x1="0" y1="0" x2="1" y2="0.2"><stop offset="0" stop-color="#0a24a8"/><stop offset="0.55" stop-color="#0a26ac"/><stop offset="1" stop-color="#0e2eba"/></linearGradient>
<filter id="c10f1" filterUnits="userSpaceOnUse" x="-200" y="-200" width="1424" height="1170"><feGaussianBlur stdDeviation="45"/></filter>
<filter id="c10f2" filterUnits="userSpaceOnUse" x="-200" y="-200" width="1424" height="1170"><feGaussianBlur stdDeviation="14"/></filter>
<filter id="c10f3" filterUnits="userSpaceOnUse" x="-200" y="-200" width="1424" height="1170"><feGaussianBlur stdDeviation="4"/></filter>
</defs>
<g transform="scale(0.05469,0.04026)">
<rect width="1024" height="770" fill="url(#c10b)"/>
<ellipse cx="860" cy="40" rx="420" ry="80" fill="#3050e0" opacity="0.7" filter="url(#c10f1)"/>
<ellipse cx="780" cy="560" rx="380" ry="230" fill="#2848d8" opacity="0.6" filter="url(#c10f1)"/>
<ellipse cx="180" cy="720" rx="320" ry="100" fill="#061c9a" opacity="0.4" filter="url(#c10f1)"/>
<path d="M-20 470C250 520 500 600 800 770" stroke="#1a3ac4" stroke-width="60" fill="none" opacity="0.35" filter="url(#c10f1)"/>
<ellipse cx="900" cy="265" rx="240" ry="55" fill="#051a9a" opacity="0.7" filter="url(#c10f2)"/>
<ellipse cx="260" cy="144" rx="300" ry="22" fill="#1a38c2" opacity="0.5" filter="url(#c10f2)"/>
<path d="M250 50C600 52 850 42 1040 28" stroke="#4464ee" stroke-width="34" fill="none" opacity="0.6" filter="url(#c10f2)"/>
<path d="M520 120C760 118 900 115 1040 100" stroke="#4262ee" stroke-width="26" fill="none" opacity="0.6" filter="url(#c10f2)"/>
<path d="M-20 285C250 295 480 312 700 285C850 265 950 215 1040 178" stroke="#3454e8" stroke-width="30" fill="none" opacity="0.7" filter="url(#c10f2)"/>
<path d="M600 298C800 280 920 230 1040 178" stroke="#6a88fa" stroke-width="10" fill="none" opacity="0.7" filter="url(#c10f3)"/>
<path d="M700 140C850 135 950 125 1040 112" stroke="#6a88fa" stroke-width="7" fill="none" opacity="0.5" filter="url(#c10f3)"/>
</g></svg>
<svg class="a" style="left:1396px;top:824px;" width="56" height="31" viewBox="0 0 56 31"><defs>
<linearGradient id="c11b" x1="0" y1="0" x2="1" y2="0.2"><stop offset="0" stop-color="#0a24a8"/><stop offset="0.55" stop-color="#0a26ac"/><stop offset="1" stop-color="#0e2eba"/></linearGradient>
<filter id="c11f1" filterUnits="userSpaceOnUse" x="-200" y="-200" width="1424" height="1170"><feGaussianBlur stdDeviation="45"/></filter>
<filter id="c11f2" filterUnits="userSpaceOnUse" x="-200" y="-200" width="1424" height="1170"><feGaussianBlur stdDeviation="14"/></filter>
<filter id="c11f3" filterUnits="userSpaceOnUse" x="-200" y="-200" width="1424" height="1170"><feGaussianBlur stdDeviation="4"/></filter>
</defs>
<g transform="scale(0.05469,0.04026)">
<rect width="1024" height="770" fill="url(#c11b)"/>
<ellipse cx="860" cy="40" rx="420" ry="80" fill="#3050e0" opacity="0.7" filter="url(#c11f1)"/>
<ellipse cx="780" cy="560" rx="380" ry="230" fill="#2848d8" opacity="0.6" filter="url(#c11f1)"/>
<ellipse cx="180" cy="720" rx="320" ry="100" fill="#061c9a" opacity="0.4" filter="url(#c11f1)"/>
<path d="M-20 470C250 520 500 600 800 770" stroke="#1a3ac4" stroke-width="60" fill="none" opacity="0.35" filter="url(#c11f1)"/>
<ellipse cx="900" cy="265" rx="240" ry="55" fill="#051a9a" opacity="0.7" filter="url(#c11f2)"/>
<ellipse cx="260" cy="144" rx="300" ry="22" fill="#1a38c2" opacity="0.5" filter="url(#c11f2)"/>
<path d="M250 50C600 52 850 42 1040 28" stroke="#4464ee" stroke-width="34" fill="none" opacity="0.6" filter="url(#c11f2)"/>
<path d="M520 120C760 118 900 115 1040 100" stroke="#4262ee" stroke-width="26" fill="none" opacity="0.6" filter="url(#c11f2)"/>
<path d="M-20 285C250 295 480 312 700 285C850 265 950 215 1040 178" stroke="#3454e8" stroke-width="30" fill="none" opacity="0.7" filter="url(#c11f2)"/>
<path d="M600 298C800 280 920 230 1040 178" stroke="#6a88fa" stroke-width="10" fill="none" opacity="0.7" filter="url(#c11f3)"/>
<path d="M700 140C850 135 950 125 1040 112" stroke="#6a88fa" stroke-width="7" fill="none" opacity="0.5" filter="url(#c11f3)"/>
</g></svg>
<svg class="a" style="left:1457px;top:824px;" width="56" height="31" viewBox="0 0 56 31"><defs>
<linearGradient id="c12b" x1="0" y1="0" x2="1" y2="0.2"><stop offset="0" stop-color="#0a24a8"/><stop offset="0.55" stop-color="#0a26ac"/><stop offset="1" stop-color="#0e2eba"/></linearGradient>
<filter id="c12f1" filterUnits="userSpaceOnUse" x="-200" y="-200" width="1424" height="1170"><feGaussianBlur stdDeviation="45"/></filter>
<filter id="c12f2" filterUnits="userSpaceOnUse" x="-200" y="-200" width="1424" height="1170"><feGaussianBlur stdDeviation="14"/></filter>
<filter id="c12f3" filterUnits="userSpaceOnUse" x="-200" y="-200" width="1424" height="1170"><feGaussianBlur stdDeviation="4"/></filter>
</defs>
<g transform="scale(0.05469,0.04026)">
<rect width="1024" height="770" fill="url(#c12b)"/>
<ellipse cx="860" cy="40" rx="420" ry="80" fill="#3050e0" opacity="0.7" filter="url(#c12f1)"/>
<ellipse cx="780" cy="560" rx="380" ry="230" fill="#2848d8" opacity="0.6" filter="url(#c12f1)"/>
<ellipse cx="180" cy="720" rx="320" ry="100" fill="#061c9a" opacity="0.4" filter="url(#c12f1)"/>
<path d="M-20 470C250 520 500 600 800 770" stroke="#1a3ac4" stroke-width="60" fill="none" opacity="0.35" filter="url(#c12f1)"/>
<ellipse cx="900" cy="265" rx="240" ry="55" fill="#051a9a" opacity="0.7" filter="url(#c12f2)"/>
<ellipse cx="260" cy="144" rx="300" ry="22" fill="#1a38c2" opacity="0.5" filter="url(#c12f2)"/>
<path d="M250 50C600 52 850 42 1040 28" stroke="#4464ee" stroke-width="34" fill="none" opacity="0.6" filter="url(#c12f2)"/>
<path d="M520 120C760 118 900 115 1040 100" stroke="#4262ee" stroke-width="26" fill="none" opacity="0.6" filter="url(#c12f2)"/>
<path d="M-20 285C250 295 480 312 700 285C850 265 950 215 1040 178" stroke="#3454e8" stroke-width="30" fill="none" opacity="0.7" filter="url(#c12f2)"/>
<path d="M600 298C800 280 920 230 1040 178" stroke="#6a88fa" stroke-width="10" fill="none" opacity="0.7" filter="url(#c12f3)"/>
<path d="M700 140C850 135 950 125 1040 112" stroke="#6a88fa" stroke-width="7" fill="none" opacity="0.5" filter="url(#c12f3)"/>
</g></svg>
<svg class="a" style="left:1517px;top:824px;" width="56" height="31" viewBox="0 0 56 31"><defs>
<linearGradient id="c13b" x1="0" y1="0" x2="1" y2="0.2"><stop offset="0" stop-color="#0a24a8"/><stop offset="0.55" stop-color="#0a26ac"/><stop offset="1" stop-color="#0e2eba"/></linearGradient>
<filter id="c13f1" filterUnits="userSpaceOnUse" x="-200" y="-200" width="1424" height="1170"><feGaussianBlur stdDeviation="45"/></filter>
<filter id="c13f2" filterUnits="userSpaceOnUse" x="-200" y="-200" width="1424" height="1170"><feGaussianBlur stdDeviation="14"/></filter>
<filter id="c13f3" filterUnits="userSpaceOnUse" x="-200" y="-200" width="1424" height="1170"><feGaussianBlur stdDeviation="4"/></filter>
</defs>
<g transform="scale(0.05469,0.04026)">
<rect width="1024" height="770" fill="url(#c13b)"/>
<ellipse cx="860" cy="40" rx="420" ry="80" fill="#3050e0" opacity="0.7" filter="url(#c13f1)"/>
<ellipse cx="780" cy="560" rx="380" ry="230" fill="#2848d8" opacity="0.6" filter="url(#c13f1)"/>
<ellipse cx="180" cy="720" rx="320" ry="100" fill="#061c9a" opacity="0.4" filter="url(#c13f1)"/>
<path d="M-20 470C250 520 500 600 800 770" stroke="#1a3ac4" stroke-width="60" fill="none" opacity="0.35" filter="url(#c13f1)"/>
<ellipse cx="900" cy="265" rx="240" ry="55" fill="#051a9a" opacity="0.7" filter="url(#c13f2)"/>
<ellipse cx="260" cy="144" rx="300" ry="22" fill="#1a38c2" opacity="0.5" filter="url(#c13f2)"/>
<path d="M250 50C600 52 850 42 1040 28" stroke="#4464ee" stroke-width="34" fill="none" opacity="0.6" filter="url(#c13f2)"/>
<path d="M520 120C760 118 900 115 1040 100" stroke="#4262ee" stroke-width="26" fill="none" opacity="0.6" filter="url(#c13f2)"/>
<path d="M-20 285C250 295 480 312 700 285C850 265 950 215 1040 178" stroke="#3454e8" stroke-width="30" fill="none" opacity="0.7" filter="url(#c13f2)"/>
<path d="M600 298C800 280 920 230 1040 178" stroke="#6a88fa" stroke-width="10" fill="none" opacity="0.7" filter="url(#c13f3)"/>
<path d="M700 140C850 135 950 125 1040 112" stroke="#6a88fa" stroke-width="7" fill="none" opacity="0.5" filter="url(#c13f3)"/>
</g></svg>
<svg class="a" style="left:1578px;top:824px;" width="56" height="31" viewBox="0 0 56 31"><defs>
<linearGradient id="c14b" x1="0" y1="0" x2="1" y2="0.2"><stop offset="0" stop-color="#0a24a8"/><stop offset="0.55" stop-color="#0a26ac"/><stop offset="1" stop-color="#0e2eba"/></linearGradient>
<filter id="c14f1" filterUnits="userSpaceOnUse" x="-200" y="-200" width="1424" height="1170"><feGaussianBlur stdDeviation="45"/></filter>
<filter id="c14f2" filterUnits="userSpaceOnUse" x="-200" y="-200" width="1424" height="1170"><feGaussianBlur stdDeviation="14"/></filter>
<filter id="c14f3" filterUnits="userSpaceOnUse" x="-200" y="-200" width="1424" height="1170"><feGaussianBlur stdDeviation="4"/></filter>
</defs>
<g transform="scale(0.05469,0.04026)">
<rect width="1024" height="770" fill="url(#c14b)"/>
<ellipse cx="860" cy="40" rx="420" ry="80" fill="#3050e0" opacity="0.7" filter="url(#c14f1)"/>
<ellipse cx="780" cy="560" rx="380" ry="230" fill="#2848d8" opacity="0.6" filter="url(#c14f1)"/>
<ellipse cx="180" cy="720" rx="320" ry="100" fill="#061c9a" opacity="0.4" filter="url(#c14f1)"/>
<path d="M-20 470C250 520 500 600 800 770" stroke="#1a3ac4" stroke-width="60" fill="none" opacity="0.35" filter="url(#c14f1)"/>
<ellipse cx="900" cy="265" rx="240" ry="55" fill="#051a9a" opacity="0.7" filter="url(#c14f2)"/>
<ellipse cx="260" cy="144" rx="300" ry="22" fill="#1a38c2" opacity="0.5" filter="url(#c14f2)"/>
<path d="M250 50C600 52 850 42 1040 28" stroke="#4464ee" stroke-width="34" fill="none" opacity="0.6" filter="url(#c14f2)"/>
<path d="M520 120C760 118 900 115 1040 100" stroke="#4262ee" stroke-width="26" fill="none" opacity="0.6" filter="url(#c14f2)"/>
<path d="M-20 285C250 295 480 312 700 285C850 265 950 215 1040 178" stroke="#3454e8" stroke-width="30" fill="none" opacity="0.7" filter="url(#c14f2)"/>
<path d="M600 298C800 280 920 230 1040 178" stroke="#6a88fa" stroke-width="10" fill="none" opacity="0.7" filter="url(#c14f3)"/>
<path d="M700 140C850 135 950 125 1040 112" stroke="#6a88fa" stroke-width="7" fill="none" opacity="0.5" filter="url(#c14f3)"/>
</g></svg>
<div class="a" style="left:726px;top:859px;width:910px;height:16px;background:#dadada"></div>
<svg class="a" style="left:788px;top:856px;" width="6" height="4" viewBox="0 0 6 4"><path d="M0 0H6L3 4Z" fill="#111"/></svg>
<svg class="a" style="left:853px;top:856px;" width="6" height="4" viewBox="0 0 6 4"><path d="M0 0H6L3 4Z" fill="#111"/></svg>
<svg class="a" style="left:917px;top:856px;" width="6" height="4" viewBox="0 0 6 4"><path d="M0 0H6L3 4Z" fill="#111"/></svg>
<svg class="a" style="left:982px;top:856px;" width="6" height="4" viewBox="0 0 6 4"><path d="M0 0H6L3 4Z" fill="#111"/></svg>
<svg class="a" style="left:1047px;top:856px;" width="6" height="4" viewBox="0 0 6 4"><path d="M0 0H6L3 4Z" fill="#111"/></svg>
<svg class="a" style="left:1112px;top:856px;" width="6" height="4" viewBox="0 0 6 4"><path d="M0 0H6L3 4Z" fill="#111"/></svg>
<svg class="a" style="left:1177px;top:856px;" width="6" height="4" viewBox="0 0 6 4"><path d="M0 0H6L3 4Z" fill="#111"/></svg>
<svg class="a" style="left:1242px;top:856px;" width="6" height="4" viewBox="0 0 6 4"><path d="M0 0H6L3 4Z" fill="#111"/></svg>
<svg class="a" style="left:1307px;top:856px;" width="6" height="4" viewBox="0 0 6 4"><path d="M0 0H6L3 4Z" fill="#111"/></svg>
<svg class="a" style="left:1372px;top:856px;" width="6" height="4" viewBox="0 0 6 4"><path d="M0 0H6L3 4Z" fill="#111"/></svg>
<svg class="a" style="left:1437px;top:856px;" width="6" height="4" viewBox="0 0 6 4"><path d="M0 0H6L3 4Z" fill="#111"/></svg>
<svg class="a" style="left:1502px;top:856px;" width="6" height="4" viewBox="0 0 6 4"><path d="M0 0H6L3 4Z" fill="#111"/></svg>
<svg class="a" style="left:1567px;top:856px;" width="6" height="4" viewBox="0 0 6 4"><path d="M0 0H6L3 4Z" fill="#111"/></svg>
<div class="a" style="left:726px;top:875px;width:910px;height:1px;background:#c8c8c8"></div>
<div class="a" style="left:726px;top:876px;width:910px;height:39px;background:#f6f3f6"></div>
<div class="a" style="left:726px;top:915px;width:910px;height:41px;background:#c8c8c8"></div>
<div class="a" style="left:726px;top:915px;width:910px;height:1px;background:#b0b0b0"></div>
<div class="a" style="left:1636px;top:858px;width:23px;height:17px;background:#8a8a8a"></div>
<div class="a" style="left:1636px;top:915px;width:23px;height:41px;background:#7e7e7e"></div>
<div class="a" style="left:1635px;top:821px;width:1px;height:37px;background:#111"></div>
<div class="a" style="left:1659px;top:787px;width:5px;height:169px;background:#f6f2f5"></div>
<div class="a" style="left:1661px;top:805px;width:1px;height:150px;background:#b8b8b8"></div>
<div class="a" style="left:725px;top:956px;width:939px;height:17px;background:#f4f2f4"></div>
<svg class="a" style="left:731px;top:961px;" width="5" height="7" viewBox="0 0 5 7"><path d="M5 0L0 3.5L5 7Z" fill="#333"/></svg>
<div class="a" style="left:743px;top:957px;width:858px;height:15px;border:1px solid #a0a0a0;border-radius:2px;background:linear-gradient(#f6f6f6,#e0e0e0 55%,#cacaca)"></div>
<svg class="a" style="left:746px;top:961px;" width="5" height="7" viewBox="0 0 5 7"><path d="M0.5 0V7M3.5 0V7" stroke="#777"/></svg>
<svg class="a" style="left:1594px;top:961px;" width="5" height="7" viewBox="0 0 5 7"><path d="M0.5 0V7M3.5 0V7" stroke="#777"/></svg>
<svg class="a" style="left:1609px;top:961px;" width="5" height="8" viewBox="0 0 5 8"><path d="M0 0L5 4L0 8Z" fill="#333"/></svg>
<div class="a" style="left:1621px;top:957px;width:15px;height:15px;border:1px solid #a0a0a0;background:linear-gradient(#f4f4f4,#d8d8d8)"></div>
<svg class="a" style="left:1624px;top:960px;" width="9" height="9" viewBox="0 0 9 9"><path d="M4.5 0.5V8.5M0.5 4.5H8.5" stroke="#111" stroke-width="2"/></svg>
<div class="a" style="left:1637px;top:957px;width:6px;height:15px;border:1px solid #b0b0b0;background:#e8e8e8"></div>
<div class="a" style="left:1643px;top:957px;width:15px;height:15px;border:1px solid #a0a0a0;background:linear-gradient(#f4f4f4,#d8d8d8)"></div>
<svg class="a" style="left:1646px;top:960px;" width="9" height="9" viewBox="0 0 9 9"><path d="M0.5 4.5H8.5" stroke="#111" stroke-width="2"/></svg>
<svg class="a" style="left:731px;top:981px;" width="18" height="14" viewBox="0 0 18 14"><defs><linearGradient id="tg" x1="0" y1="0" x2="0" y2="1"><stop offset="0" stop-color="#c8c8c8"/><stop offset="1" stop-color="#6a6a6a"/></linearGradient></defs><rect x="0.5" y="0.5" width="2" height="13" fill="url(#tg)"/><path d="M4 0.5L16.5 7L4 13.5Z" fill="url(#tg)" stroke="#777" stroke-width="0.6"/></svg>
<svg class="a" style="left:757px;top:981px;" width="15" height="14" viewBox="0 0 15 14"><path d="M0.5 0.5L14.5 7L0.5 13.5Z" fill="url(#tg)" stroke="#777" stroke-width="0.6"/></svg>
<svg class="a" style="left:781px;top:981px;" width="14" height="14" viewBox="0 0 14 14"><rect x="0.5" y="0.5" width="4.5" height="13" fill="url(#tg)" stroke="#777" stroke-width="0.6"/><rect x="8.5" y="0.5" width="4.5" height="13" fill="url(#tg)" stroke="#777" stroke-width="0.6"/></svg>
<svg class="a" style="left:806px;top:982px;" width="14" height="13" viewBox="0 0 14 13"><rect x="0.5" y="0.5" width="12.5" height="12" fill="url(#tg)" stroke="#666" stroke-width="0.8"/></svg>
<div class="a" style="left:826px;top:978px;width:1px;height:19px;background:#9a9a9a"></div>
<svg class="a" style="left:838px;top:981px;" width="13" height="14" viewBox="0 0 13 14"><rect x="0.5" y="0.5" width="2.5" height="13" fill="url(#tg)"/><path d="M12.5 0.5L3.5 7L12.5 13.5Z" fill="url(#tg)" stroke="#777" stroke-width="0.6"/></svg>
<svg class="a" style="left:862px;top:981px;" width="14" height="14" viewBox="0 0 14 14"><rect x="10.5" y="0.5" width="2.5" height="13" fill="url(#tg)"/><path d="M0.5 0.5L9.5 7L0.5 13.5Z" fill="url(#tg)" stroke="#777" stroke-width="0.6"/></svg>
<div class="a" style="left:1449px;top:979px;width:72px;height:19px;border-left:1px solid #a8a8a8;border-top:1px solid #a8a8a8;background:#f6f2f5"></div>
<div class="t" style="left:1453px;top:983.47px;font-size:11.26px;color:#000;font-weight:normal;">00:00:00:00</div>
<div class="a" style="left:1525px;top:979px;width:72px;height:19px;border-left:1px solid #a8a8a8;border-top:1px solid #a8a8a8;background:#f6f2f5"></div>
<div class="t" style="left:1529px;top:983.47px;font-size:11.26px;color:#000;font-weight:normal;">00:00:00:10</div>
<div class="a" style="left:1601px;top:979px;width:72px;height:19px;border-left:1px solid #a8a8a8;border-top:1px solid #a8a8a8;background:#f6f2f5"></div>
<div class="t" style="left:1605px;top:983.47px;font-size:11.26px;color:#000;font-weight:normal;">00:00:00:10</div>
<div class="a" style="left:506px;top:1002px;width:1158px;height:22px;background:#b4b4b4"></div>
<svg class="a" style="left:506px;top:1002px" width="320" height="22" viewBox="0 0 320 22"><path d="M218 18L225 1H306L299 18Z" fill="#dcdcdc" stroke="#999"/><path d="M137 18L144 1H225L218 18Z" fill="#dcdcdc" stroke="#999"/><path d="M64 18L71 1H144L137 18Z" fill="#dcdcdc" stroke="#999"/><path d="M0 0H71L64 18H10Z" fill="#f6f2f5"/><path d="M1 1L10 18H64L71 1" fill="none" stroke="#8a8a8a"/></svg>
<div class="t" style="left:520px;top:1005.54px;font-size:11.77px;color:#000;font-weight:bold;">Timeline</div>
<div class="t" style="left:589px;top:1006.73px;font-size:10.36px;color:#000;font-weight:normal;">Playlists</div>
<div class="t" style="left:654px;top:1006.68px;font-size:10.42px;color:#000;font-weight:normal;">Compilation</div>
<div class="t" style="left:737px;top:1006.84px;font-size:10.23px;color:#000;font-weight:normal;">DVD Scripts</div>
<div class="a" style="left:724px;top:787px;width:1px;height:34px;background:#c8c8c8"></div>
<div class="a" style="left:724px;top:956px;width:1px;height:46px;background:#c8c8c8"></div>
<div class="a" style="left:0px;top:1024px;width:1664px;height:1px;background:#9a9a9a"></div>
<div class="a" style="left:0px;top:1025px;width:1664px;height:1px;background:#ffffff"></div>
<div class="a" style="left:0px;top:1026px;width:1664px;height:24px;background:#f6f2f5"></div>
<div class="t" style="left:6px;top:1032.69px;font-size:11.0px;color:#000;font-weight:normal;">Selection tool: Drag an object to move it.&nbsp; Ctrl-drag to make a copy of the object(s).</div>
<div class="a" style="left:1515px;top:1028px;width:1px;height:20px;background:#c8c8c8"></div>
<svg class="a" style="left:1521px;top:1029px;" width="17" height="17" viewBox="0 0 17 17"><circle cx="8.5" cy="8.5" r="7.5" fill="#b8e8a0" stroke="#5a8a4a"/><path d="M8.5 1A7.5 7.5 0 0 1 16 8.5H8.5Z" fill="#6ac84a"/><circle cx="8.5" cy="8.5" r="2" fill="#fff" stroke="#777"/></svg>
<div class="t" style="left:1541px;top:1032.59px;font-size:10.52px;color:#000;font-weight:normal;">Disc Space Used: 1%</div>
</body></html>
